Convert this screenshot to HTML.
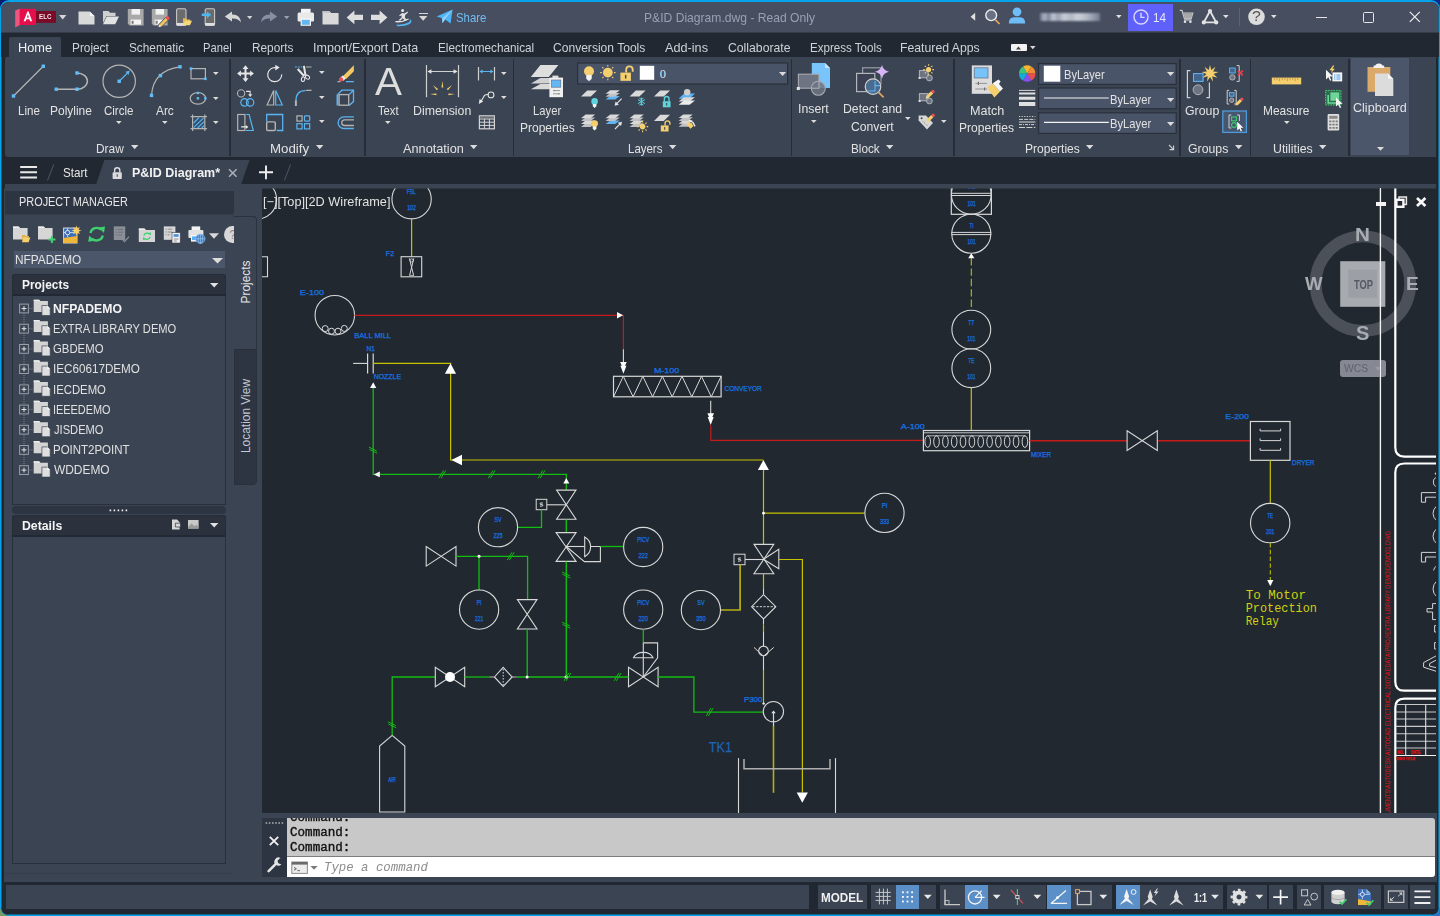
<!DOCTYPE html>
<html>
<head>
<meta charset="utf-8">
<title>P&amp;ID Diagram.dwg - Read Only</title>
<style>
*{box-sizing:border-box;margin:0;padding:0}
html,body{width:1440px;height:916px;overflow:hidden;background:#04a3ea}
body{font-family:"Liberation Sans",sans-serif;font-size:12px;color:#e4e4e4;position:relative}
.abs{position:absolute}
#win{position:absolute;left:0;top:0;width:1440px;height:916px;border:solid #04a3ea;border-width:2px 1px 1px 1px;border-radius:9px;background:#23262d;overflow:hidden}
#inner{position:absolute;left:-1px;top:-2px;width:1440px;height:916px}
#titlebar{position:absolute;left:0;top:0;width:1440px;height:32px;background:#464e5f}
.t{position:absolute;white-space:nowrap;line-height:1}
svg{position:absolute;overflow:visible}
</style>
</head>
<body>
<div class="abs" style="left:0;top:0;width:10px;height:10px;background:#0b1c6e"></div><div class="abs" style="left:1430px;top:0;width:10px;height:10px;background:#0b2a8c"></div><div class="abs" style="left:0;top:906px;width:10px;height:10px;background:#7d9a5c"></div><div class="abs" style="left:1430px;top:906px;width:10px;height:10px;background:#2f6fc4"></div>
<div id="win"><div id="inner">
<div id="titlebar"></div>
<div class="abs" style="left:1px;top:7px;width:1px;height:902px;background:#14648c"></div><div class="abs" style="left:1438px;top:7px;width:1px;height:902px;background:#14648c"></div><div class="abs" style="left:7px;top:914px;width:1426px;height:1px;background:#14648c"></div>
<!-- p1_title.py -->
<svg style="left:14px;top:7px;" width="44" height="22" viewBox="0 0 44 22">
<path d="M1.2 3.6 L5.8 1.8 V18 L1.2 20.6Z" fill="#f0557f"/>
<rect x="5.8" y="1.8" width="16.2" height="16.2" fill="#e5104b"/>
<path d="M13.4 4.4 L9.6 14.2 H11.7 L12.4 12.2 H15.4 L16.1 14.2 H18.2 L14.6 4.4Z M12.9 10.6 L13.9 7.4 L14.9 10.6Z" fill="#fff" fill-rule="evenodd"/>
<rect x="22" y="4" width="20" height="11.8" fill="#7a0a26"/>
</svg>
<span class="t" style="left:39.38px;top:13.23px;font-size:7.3px;color:#f3e6ea;font-weight:bold;transform:scaleX(0.8489);transform-origin:0 0;">ELC</span>
<svg style="left:58.599999999999994px;top:14.5px" width="7.4" height="4.4" viewBox="0 0 7.4 4.4"><path d="M0 0H7.4L3.7 4.4Z" fill="#d6d6d6"/></svg>
<svg style="left:78px;top:10px;" width="18" height="16" viewBox="0 0 18 16"><path d="M0.5 1.5H11.5L16.5 6V14.5H0.5Z" fill="#d9d9d9"/><path d="M11.8 1.5V6H16.5Z" fill="#f4f4f4"/></svg>
<svg style="left:102px;top:10px;" width="18" height="16" viewBox="0 0 18 16"><path d="M1 1H6.5L8 2.8H13.5V6H4.5L1 13Z" fill="#cfcfcf"/><path d="M4.8 6.5H17L13.2 14.2H1Z" fill="#e2e2e2"/></svg>
<svg style="left:126.5px;top:8px;" width="18" height="19" viewBox="0 0 18 19"><path d="M0.8 1H16.6V17.6H2.6L0.8 15.8Z" fill="#a9a9a9"/><rect x="4.6" y="1" width="8.4" height="5.6" fill="#f2f2f2"/><rect x="3.6" y="11.6" width="10.4" height="5" fill="#f5f5f5"/><rect x="4.6" y="12.8" width="2" height="3" fill="#7a7a7a"/></svg>
<svg style="left:150.8px;top:8px;" width="18" height="19" viewBox="0 0 18 19"><path d="M0.8 1H16.6V17.6H2.6L0.8 15.8Z" fill="#a9a9a9"/><rect x="4.6" y="1" width="8.4" height="5.6" fill="#f2f2f2"/><rect x="3.6" y="11.6" width="10.4" height="5" fill="#f5f5f5"/><rect x="4.6" y="12.8" width="2" height="3" fill="#7a7a7a"/></svg>
<svg style="left:158px;top:15px;" width="12" height="12" viewBox="0 0 12 12"><rect x="0" y="3" width="8" height="9" fill="#464e5f" opacity="0"/><path d="M1.2 9.2 L7.6 2.4 L10.4 5 L4 11.6 L0.6 12.2Z" fill="#f2c55c" stroke="#464e5f" stroke-width="1"/><path d="M7.2 2.8 L8.8 1.2 Q9.6 0.6 10.4 1.4 L11.4 2.4 Q12 3.2 11.2 4 L10 5.2Z" fill="#e8505b"/><path d="M0.6 12.2 L1.2 9.6 L3.4 11.6Z" fill="#e8e8e8"/></svg>
<svg style="left:176px;top:8px;" width="18" height="19" viewBox="0 0 18 19"><rect x="0.6" y="0.8" width="9.4" height="16.6" rx="1.4" fill="#6b6b6b" stroke="#c9c9c9" stroke-width="1.1"/><rect x="0.6" y="15" width="9.4" height="2.4" fill="#dedede"/><path d="M7 10.2H10L11 11.4H14.2V13H8.4L7 16.8Z" fill="#e9b94d"/><path d="M8.6 12.8H16L14 17.2H7Z" fill="#f7d77a"/></svg>
<svg style="left:201px;top:8px;" width="16" height="19" viewBox="0 0 16 19"><rect x="4.2" y="0.8" width="9.4" height="16.6" rx="1.4" fill="#6b6b6b" stroke="#c9c9c9" stroke-width="1.1"/><rect x="4.2" y="15" width="9.4" height="2.4" fill="#dedede"/><path d="M0.8 5.6H6V3.4L10.2 6.8L6 10.2V8H0.8Z" fill="#4db6f5"/></svg>
<svg style="left:224px;top:11px;" width="18" height="13" viewBox="0 0 18 13"><path d="M0.8 5.4L8 0.6V3.6Q16 3.2 17 11.4Q14 7.2 8 7.6V10.6Z" fill="#d6d6d6"/></svg>
<svg style="left:247.3px;top:16px" width="5.4" height="3.2" viewBox="0 0 5.4 3.2"><path d="M0 0H5.4L2.7 3.2Z" fill="#d6d6d6"/></svg>
<svg style="left:260px;top:11px;" width="18" height="13" viewBox="0 0 18 13"><path d="M17.2 5.4L10 0.6V3.6Q2 3.2 1 11.4Q4 7.2 10 7.6V10.6Z" fill="#8790a2"/></svg>
<svg style="left:283.90000000000003px;top:16px" width="5.4" height="3.2" viewBox="0 0 5.4 3.2"><path d="M0 0H5.4L2.7 3.2Z" fill="#9aa2b2"/></svg>
<svg style="left:297px;top:8px;" width="18" height="19" viewBox="0 0 18 19"><rect x="4" y="0.8" width="9.6" height="5" fill="#f4f4f4"/><path d="M2 4.4H15.6Q17 4.4 17 6V12.6Q17 13.6 16 13.6H1.6Q0.6 13.6 0.6 12.6V6Q0.6 4.4 2 4.4Z" fill="#e9e9e9"/><rect x="3.6" y="10.4" width="10.4" height="7.4" fill="#f6f6f6"/><rect x="4.8" y="11.8" width="8" height="5" fill="#63b7f3"/></svg>
<svg style="left:321.5px;top:9.5px;" width="18" height="16" viewBox="0 0 18 16"><path d="M0.5 1.2H7.6L9 3H16.6V14.6H0.5Z" fill="#d9d9d9"/><path d="M0.5 1.2H7.6L9 3H0.5Z" fill="#c4c4c4"/></svg>
<svg style="left:346px;top:10px;" width="18" height="15" viewBox="0 0 18 15"><path d="M0.6 7.4L8.4 0.6V4.8H17V10H8.4V14.2Z" fill="#dedede"/></svg>
<svg style="left:370px;top:10px;" width="18" height="15" viewBox="0 0 18 15"><path d="M17.4 7.4L9.6 0.6V4.8H1V10H9.6V14.2Z" fill="#dedede"/></svg>
<svg style="left:394px;top:8px;" width="20" height="19" viewBox="0 0 20 19"><circle cx="8.6" cy="2.4" r="1.5" fill="#e4e4e4"/><path d="M5.2 7.2 L8.4 5 L10.6 5.4 L13.4 3.6 L14 4.4 L11.2 7 L10.8 9.6 L12.8 12 L11.4 12.8 L8.6 10.2 L6.6 12.6 L4.2 12.4 L7.6 9.4 L7.6 7.2 L5.8 8.2Z" fill="#e4e4e4"/><path d="M1.4 13.6 Q8 14.4 14.6 11" stroke="#e4e4e4" stroke-width="1.3" fill="none"/><path d="M2.6 16.6 Q10 17 14.4 14.6 Q16.8 13 15.6 11 Q18.6 12.6 16.6 15.2 Q12.6 18.6 3 18.2Z" fill="#55b4f2"/></svg>
<div class="abs" style="left:419.2px;top:12.8px;width:8.8px;height:1.4px;background:#d6d6d6;"></div>
<svg style="left:419.40000000000003px;top:15.6px" width="8.4" height="4.8" viewBox="0 0 8.4 4.8"><path d="M0 0H8.4L4.2 4.8Z" fill="#d6d6d6"/></svg>
<svg style="left:435.5px;top:9px;" width="18" height="16" viewBox="0 0 18 16"><path d="M0.6 7.6L16.6 0.6L14.6 14.4L9 10.4L6.6 14.2L6 9.2Z" fill="#4fb3f6"/><path d="M6 9.2L16.6 0.6L9 10.4L6.6 14.2Z" fill="#8fd0fb"/></svg>
<span class="t" style="left:456.48px;top:10.68px;font-size:13px;color:#72bdf3;transform:scaleX(0.8750);transform-origin:0 0;">Share</span>
<span class="t" style="left:643.57px;top:10.88px;font-size:13px;color:#98a1b3;transform:scaleX(0.9320);transform-origin:0 0;">P&amp;ID Diagram.dwg - Read Only</span>
<svg style="left:970px;top:12px;" width="6" height="10" viewBox="0 0 6 10"><path d="M5.2 0.8V8.8L0.6 4.8Z" fill="#e0e0e0"/></svg>
<svg style="left:984px;top:7px;" width="18" height="20" viewBox="0 0 18 20"><circle cx="7.2" cy="8.2" r="5.4" fill="#687086" stroke="#ececec" stroke-width="1.4"/><path d="M11.2 12.6L15.6 17" stroke="#e9a45a" stroke-width="1.7"/></svg>
<svg style="left:1008px;top:6px;" width="18" height="19" viewBox="0 0 18 19"><circle cx="9" cy="5.8" r="4.4" fill="#6ebdf8"/><path d="M0.8 17.6Q0.8 11.2 6 11.2H12Q17.2 11.2 17.2 17.6Z" fill="#6ebdf8"/></svg>
<div class="abs" style="left:1040px;top:13px;width:60px;height:8px;filter:blur(1.2px);opacity:.8;background:linear-gradient(90deg,#7d879b 0,#c7cfdd 8%,#8d97ab 14%,#dfe5ee 22%,#aeb7c8 30%,#e8ecf3 40%,#cdd4e0 52%,#eef1f6 62%,#d8dee8 74%,#b3bccb 86%,#7d879b 100%)"></div>
<svg style="left:1116.2px;top:15px" width="5.6" height="3.2" viewBox="0 0 5.6 3.2"><path d="M0 0H5.6L2.8 3.2Z" fill="#e0e0e0"/></svg>
<div class="abs" style="left:1128px;top:4px;width:45px;height:26.5px;background:#6061fb;"></div>
<svg style="left:1133px;top:9px;" width="16" height="16" viewBox="0 0 16 16"><circle cx="8" cy="8" r="7" fill="none" stroke="#d9d8ff" stroke-width="1.4"/><path d="M8 3.8V8.4H11.6" stroke="#d9d8ff" stroke-width="1.4" fill="none"/></svg>
<span class="t" style="left:1153.10px;top:11.48px;font-size:13px;color:#e6e6ff;transform:scaleX(0.9008);transform-origin:0 0;">14</span>
<svg style="left:1179px;top:9px;" width="16" height="16" viewBox="0 0 16 16"><path d="M0.8 1.4H3L5.4 9.6H12.2L13.8 4H4" stroke="#c9c9c9" stroke-width="1.2" fill="none"/><path d="M4.2 4.2H13.6L12.2 9.2H5.6Z" fill="#a8a8a8"/><circle cx="6" cy="12.8" r="1.3" fill="#e0e0e0"/><circle cx="11.4" cy="12.8" r="1.3" fill="#e0e0e0"/><path d="M5 11H12.6" stroke="#e0e0e0" stroke-width="1"/></svg>
<svg style="left:1201px;top:8px;" width="18" height="18" viewBox="0 0 18 18"><path d="M9 3L2.8 14.4H15.2Z" fill="none" stroke="#e2e2e2" stroke-width="1.9" stroke-linejoin="round"/><circle cx="9" cy="3" r="2.1" fill="#e2e2e2"/><circle cx="2.8" cy="14.4" r="2.1" fill="#e2e2e2"/><circle cx="15.2" cy="14.4" r="2.1" fill="#e2e2e2"/></svg>
<svg style="left:1223.2px;top:15px" width="5.6" height="3.2" viewBox="0 0 5.6 3.2"><path d="M0 0H5.6L2.8 3.2Z" fill="#e0e0e0"/></svg>
<div class="abs" style="left:1239.2px;top:7.6px;width:1px;height:18px;background:#59647b;"></div>
<svg style="left:1247px;top:8px;" width="18" height="18" viewBox="0 0 18 18"><circle cx="9.5" cy="8.8" r="8.3" fill="#dcdcdc"/></svg>
<span class="t" style="left:1251.92px;top:9.34px;font-size:14px;color:#555;transform:scaleX(1.1343);transform-origin:0 0;">?</span>
<svg style="left:1271.2px;top:15px" width="5.6" height="3.2" viewBox="0 0 5.6 3.2"><path d="M0 0H5.6L2.8 3.2Z" fill="#e0e0e0"/></svg>
<div class="abs" style="left:1316px;top:17px;width:10.5px;height:1.1px;background:#e6e6e6;"></div>
<div class="abs" style="left:1363px;top:12px;width:10.5px;height:10.5px;border:1.2px solid #e6e6e6;border-radius:1.5px"></div>
<svg style="left:1409px;top:11px;" width="12" height="12" viewBox="0 0 12 12"><path d="M0.8 0.8L10.8 10.8M10.8 0.8L0.8 10.8" stroke="#eeeeee" stroke-width="1.2"/></svg>
<!-- p2a_ribbon.py -->
<div class="abs" style="left:0px;top:32px;width:1440px;height:25px;background:#222831;"></div>
<div class="abs" style="left:0px;top:32px;width:1440px;height:1px;background:#343b49;"></div>
<div class="abs" style="left:9px;top:36.5px;width:52px;height:21px;background:#3b4453;border-radius:2px 2px 0 0"></div>
<div class="abs" style="left:5px;top:57px;width:1431px;height:100px;background:#3b4453;border-radius:2px 0 0 3px"></div>
<span class="t" style="left:18.45px;top:40.72px;font-size:13.4px;color:#f0f0f0;transform:scaleX(0.9531);transform-origin:0 0;">Home</span>
<span class="t" style="left:72.03px;top:40.72px;font-size:13.4px;color:#cfd2d8;transform:scaleX(0.8827);transform-origin:0 0;">Project</span>
<span class="t" style="left:128.97px;top:40.72px;font-size:13.4px;color:#cfd2d8;transform:scaleX(0.8807);transform-origin:0 0;">Schematic</span>
<span class="t" style="left:203.33px;top:40.72px;font-size:13.4px;color:#cfd2d8;transform:scaleX(0.8359);transform-origin:0 0;">Panel</span>
<span class="t" style="left:251.53px;top:40.72px;font-size:13.4px;color:#cfd2d8;transform:scaleX(0.8830);transform-origin:0 0;">Reports</span>
<span class="t" style="left:312.63px;top:40.72px;font-size:13.4px;color:#cfd2d8;transform:scaleX(0.9367);transform-origin:0 0;">Import/Export Data</span>
<span class="t" style="left:437.78px;top:40.72px;font-size:13.4px;color:#cfd2d8;transform:scaleX(0.8791);transform-origin:0 0;">Electromechanical</span>
<span class="t" style="left:553.12px;top:40.72px;font-size:13.4px;color:#cfd2d8;transform:scaleX(0.9008);transform-origin:0 0;">Conversion Tools</span>
<span class="t" style="left:665.30px;top:40.72px;font-size:13.4px;color:#cfd2d8;transform:scaleX(0.9465);transform-origin:0 0;">Add-ins</span>
<span class="t" style="left:727.66px;top:40.72px;font-size:13.4px;color:#cfd2d8;transform:scaleX(0.9123);transform-origin:0 0;">Collaborate</span>
<span class="t" style="left:809.55px;top:40.72px;font-size:13.4px;color:#cfd2d8;transform:scaleX(0.8640);transform-origin:0 0;">Express Tools</span>
<span class="t" style="left:900.39px;top:40.72px;font-size:13.4px;color:#cfd2d8;transform:scaleX(0.9147);transform-origin:0 0;">Featured Apps</span>
<div class="abs" style="left:1010.5px;top:43.6px;width:16.5px;height:7.6px;background:#f2f2f2;border-radius:1px"></div>
<svg style="left:1016.2px;top:45.6px;" width="5" height="4" viewBox="0 0 5 4"><path d="M0 3.4H5L2.5 0.4Z" fill="#444"/></svg>
<svg style="left:1030.0px;top:46.2px" width="5.6" height="3.2" viewBox="0 0 5.6 3.2"><path d="M0 0H5.6L2.8 3.2Z" fill="#d8d8d8"/></svg>
<div class="abs" style="left:229.3px;top:58.5px;width:1.6px;height:97.5px;background:#272d38;"></div>
<div class="abs" style="left:364.2px;top:58.5px;width:1.6px;height:97.5px;background:#272d38;"></div>
<div class="abs" style="left:512.8px;top:58.5px;width:1.6px;height:97.5px;background:#272d38;"></div>
<div class="abs" style="left:790.6px;top:58.5px;width:1.6px;height:97.5px;background:#272d38;"></div>
<div class="abs" style="left:953.2px;top:58.5px;width:1.6px;height:97.5px;background:#272d38;"></div>
<div class="abs" style="left:1179.2px;top:58.5px;width:1.6px;height:97.5px;background:#272d38;"></div>
<div class="abs" style="left:1249.8px;top:58.5px;width:1.6px;height:97.5px;background:#272d38;"></div>
<div class="abs" style="left:1348.4px;top:58.5px;width:1.6px;height:97.5px;background:#272d38;"></div>
<svg style="left:5px;top:57px;" width="230" height="100" viewBox="0 0 230 100">
<path d="M8.5 39 L38.3 9.25" stroke="#b4b4b4" stroke-width="1.2"/><rect x="6.80" y="37.30" width="3.4" height="3.4" fill="#62bdf7"/><rect x="36.60" y="7.55" width="3.4" height="3.4" fill="#62bdf7"/>
<path d="M51.25 32.2 H72 A10.4 8.1 0 0 0 72 16" stroke="#b4b4b4" stroke-width="1.5" fill="none"/><rect x="49.55" y="30.50" width="3.4" height="3.4" fill="#62bdf7"/><rect x="70.30" y="30.50" width="3.4" height="3.4" fill="#62bdf7"/><rect x="70.30" y="14.30" width="3.4" height="3.4" fill="#62bdf7"/>
<circle cx="114.2" cy="24.25" r="16.2" stroke="#b4b4b4" stroke-width="1.2" fill="none"/>
<path d="M114.2 24.25 L122.5 16" stroke="#5ab4f0" stroke-width="1.1"/><path d="M124.8 13.6 L123.6 18 L120.4 14.8Z" fill="#5ab4f0"/><rect x="112.50" y="22.55" width="3.4" height="3.4" fill="#62bdf7"/>
<path d="M146.5 38.4 Q148 13.5 175 9.8" stroke="#b4b4b4" stroke-width="1.2" fill="none"/><rect x="144.80" y="36.70" width="3.4" height="3.4" fill="#62bdf7"/><rect x="153.70" y="16.90" width="3.4" height="3.4" fill="#62bdf7"/><rect x="173.30" y="8.10" width="3.4" height="3.4" fill="#62bdf7"/>
<rect x="186" y="11.6" width="14.4" height="10.2" stroke="#b4b4b4" stroke-width="1.2" fill="none"/><rect x="184.70" y="10.30" width="2.6" height="2.6" fill="#62bdf7"/><rect x="199.10" y="20.50" width="2.6" height="2.6" fill="#62bdf7"/>
<ellipse cx="192.9" cy="41.3" rx="7.7" ry="5.8" stroke="#b4b4b4" stroke-width="1.2" fill="none"/><rect x="191.70" y="34.80" width="2.4" height="2.4" fill="#62bdf7"/><rect x="191.70" y="40.10" width="2.4" height="2.4" fill="#62bdf7"/><rect x="199.20" y="40.10" width="2.4" height="2.4" fill="#62bdf7"/>
<rect x="188.4" y="60.6" width="10.6" height="10.4" fill="#33506d"/>
<path d="M188.6 66 L194 60.6 M188.6 70.6 L198.6 60.8 M192.6 71 L199 64.6 M196.6 71 L199 68.6" stroke="#5ab4f0" stroke-width="1.1"/>
<path d="M185.6 59.6H202 M185.6 71.6H202 M187.6 57.6V74 M199.8 57.6V74" stroke="#b4b4b4" stroke-width="1.2"/>
</svg>
<span class="t" style="left:17.77px;top:103.68px;font-size:13px;color:#e2e2e2;transform:scaleX(0.8930);transform-origin:0 0;">Line</span>
<span class="t" style="left:50.24px;top:103.68px;font-size:13px;color:#e2e2e2;transform:scaleX(0.9214);transform-origin:0 0;">Polyline</span>
<span class="t" style="left:104.38px;top:103.68px;font-size:13px;color:#e2e2e2;transform:scaleX(0.8844);transform-origin:0 0;">Circle</span>
<svg style="left:116.2px;top:121.2px" width="5.6" height="3" viewBox="0 0 5.6 3"><path d="M0 0H5.6L2.8 3Z" fill="#dcdcdc"/></svg>
<span class="t" style="left:155.80px;top:103.68px;font-size:13px;color:#e2e2e2;transform:scaleX(0.9115);transform-origin:0 0;">Arc</span>
<svg style="left:161.5px;top:121.2px" width="5.6" height="3" viewBox="0 0 5.6 3"><path d="M0 0H5.6L2.8 3Z" fill="#dcdcdc"/></svg>
<svg style="left:212.79999999999998px;top:71.7px" width="5.6" height="3" viewBox="0 0 5.6 3"><path d="M0 0H5.6L2.8 3Z" fill="#dcdcdc"/></svg>
<svg style="left:212.79999999999998px;top:96.7px" width="5.6" height="3" viewBox="0 0 5.6 3"><path d="M0 0H5.6L2.8 3Z" fill="#dcdcdc"/></svg>
<svg style="left:212.79999999999998px;top:120.8px" width="5.6" height="3" viewBox="0 0 5.6 3"><path d="M0 0H5.6L2.8 3Z" fill="#dcdcdc"/></svg>
<span class="t" style="left:96.49px;top:141.68px;font-size:13px;color:#e2e2e2;transform:scaleX(0.9144);transform-origin:0 0;">Draw</span><svg style="left:131.0px;top:144.9px" width="7.4" height="4.3" viewBox="0 0 7.4 4.3"><path d="M0 0H7.4L3.7 4.3Z" fill="#dcdcdc"/></svg>
<svg style="left:230px;top:57px;" width="135" height="100" viewBox="0 0 135 100">
<g transform="translate(15.5,16.6)"><path d="M0 -8.4 L3 -4.6 H1 V-1 H4.6 V-3 L8.4 0 L4.6 3 V1 H1 V4.6 H3 L0 8.4 L-3 4.6 H-1 V1 H-4.6 V3 L-8.4 0 L-4.6 -3 V-1 H-1 V-4.6 H-3Z" fill="#e6e6e6"/></g>
<g transform="translate(44.7,17.4)"><path d="M1.2 -6.6 A7 7 0 1 0 7 0" stroke="#e6e6e6" stroke-width="1.2" fill="none"/><path d="M0.6 -9.6 L5 -6.8 L0.6 -4Z" fill="#e6e6e6"/></g>
<g transform="translate(73.3,16.6)"><path d="M-8.4 -6.6H-1" stroke="#5ab4f0" stroke-width="1.1" stroke-dasharray="2 1"/><path d="M2.6 -6.6H8.2" stroke="#b4b4b4" stroke-width="1.1"/>
<path d="M0.6 -7.8 L2.2 2 M-5.6 -4.6 L0.8 2.4" stroke="#e6e6e6" stroke-width="2"/><ellipse cx="-0.2" cy="5.6" rx="1.7" ry="2.3" stroke="#e6e6e6" stroke-width="1.1" fill="none" transform="rotate(15 -0.2 5.6)"/><ellipse cx="4.2" cy="3.6" rx="1.7" ry="2.3" stroke="#e6e6e6" stroke-width="1.1" fill="none" transform="rotate(-55 4.2 3.6)"/></g>
<g transform="translate(115.5,16.6)"><path d="M-8 8H-5" stroke="#b4b4b4" stroke-width="1.1"/><path d="M0.4 8H8.4" stroke="#5ab4f0" stroke-width="1.1"/>
<path d="M-3.4 3.4 L8.4 -8.4 V-2.4 L0.6 5.4 Z" fill="#f3c861"/><path d="M-5.4 4.4 L-3 2 L0.2 5 L-2 7.2Z" fill="#f1f1f1"/><circle cx="-4.4" cy="5.8" r="2.1" fill="#ee4d5a"/></g>
<g transform="translate(15.5,41)"><circle cx="-4.4" cy="-4.6" r="3.6" stroke="#b4b4b4" stroke-width="1.1" fill="none"/><path d="M0.6 -6.6H4.6V-3.6" stroke="#e6e6e6" stroke-width="1.1" fill="none"/><path d="M2.6 -3.8H6.8L4.7 -1Z" fill="#e6e6e6"/>
<circle cx="-1" cy="4.4" r="3.7" stroke="#5ab4f0" stroke-width="1.2" fill="none"/><circle cx="4.6" cy="4.4" r="3.7" stroke="#5ab4f0" stroke-width="1.2" fill="none"/></g>
<g transform="translate(44.7,41)"><path d="M-1 -7.6 L-7.6 7 H-1Z" stroke="#b4b4b4" stroke-width="1.2" fill="none"/><path d="M1 -7.6 L7.6 7 H1Z" stroke="#5ab4f0" stroke-width="1.2" fill="none"/></g>
<g transform="translate(73.3,41)"><path d="M-7.4 3 Q-7.4 -7.4 2 -7.4" stroke="#5ab4f0" stroke-width="1.3" fill="none"/><path d="M-7.4 2.4V8" stroke="#b4b4b4" stroke-width="2"/><path d="M2.4 -7.6H8.2" stroke="#b4b4b4" stroke-width="1.3"/></g>
<g transform="translate(115.5,41)"><path d="M-8 -3.4 L-3.6 -7.8 H8 V3.6 L3.6 7.6 M3.6 -3.4 L8 -7.8" stroke="#5ab4f0" stroke-width="1.3" fill="none"/><path d="M-8 -3.4V7.6" stroke="#5ab4f0" stroke-width="2"/><rect x="-6.4" y="-3.4" width="9.6" height="10.6" stroke="#b4b4b4" stroke-width="1.3" fill="none"/></g>
<g transform="translate(15.5,65.5)"><rect x="-7.8" y="-8" width="7.2" height="16" stroke="#b4b4b4" stroke-width="1.2" fill="none"/><path d="M0.6 -8H3.6L7.8 8H0.4" stroke="#5ab4f0" stroke-width="1.2" fill="none"/><path d="M-4.4 4.4H1" stroke="#e6e6e6" stroke-width="1.1"/><path d="M0.4 2.4L2.8 4.4L0.4 6.4Z" fill="#e6e6e6"/></g>
<g transform="translate(44.7,65.5)"><path d="M-8 -1V-8H8V8H2" stroke="#5ab4f0" stroke-width="1.3" fill="none"/><rect x="-8" y="-0.6" width="8.6" height="8.6" rx="1" stroke="#b4b4b4" stroke-width="1.4" fill="none"/></g>
<g transform="translate(73.3,65.5)"><rect x="-6.4" y="-6.6" width="5.2" height="5.2" stroke="#b4b4b4" stroke-width="1.2" fill="none"/><rect x="1.2" y="-6.6" width="5.2" height="5.2" rx="0.8" stroke="#5ab4f0" stroke-width="1.2" fill="none"/><rect x="-6.4" y="1.2" width="5.2" height="5.2" stroke="#5ab4f0" stroke-width="1.2" fill="none"/><rect x="1.2" y="1.2" width="5.2" height="5.2" stroke="#5ab4f0" stroke-width="1.2" fill="none"/></g>
<g transform="translate(115.5,65.5)"><path d="M8.4 -5.6H-1.6A5.8 5.8 0 0 0 -1.6 6H8.4" stroke="#5ab4f0" stroke-width="1.3" fill="none"/><path d="M8.4 -2.6H-1A2.8 2.8 0 0 0 -1 3H8.4" stroke="#b4b4b4" stroke-width="1.3" fill="none"/></g>
</svg>
<svg style="left:318.5px;top:71.4px" width="5.6" height="3" viewBox="0 0 5.6 3"><path d="M0 0H5.6L2.8 3Z" fill="#dcdcdc"/></svg>
<svg style="left:318.5px;top:95.8px" width="5.6" height="3" viewBox="0 0 5.6 3"><path d="M0 0H5.6L2.8 3Z" fill="#dcdcdc"/></svg>
<svg style="left:318.5px;top:120.2px" width="5.6" height="3" viewBox="0 0 5.6 3"><path d="M0 0H5.6L2.8 3Z" fill="#dcdcdc"/></svg>
<span class="t" style="left:269.88px;top:141.68px;font-size:13px;color:#e2e2e2;transform:scaleX(1.0215);transform-origin:0 0;">Modify</span><svg style="left:315.6px;top:144.9px" width="7.4" height="4.3" viewBox="0 0 7.4 4.3"><path d="M0 0H7.4L3.7 4.3Z" fill="#dcdcdc"/></svg>
<span class="t" style="left:375.10px;top:61.74px;font-size:39.7px;color:#dcdcdc;transform:scaleX(1.0190);transform-origin:0 0;">A</span>
<span class="t" style="left:378.04px;top:103.88px;font-size:13px;color:#e2e2e2;transform:scaleX(0.8632);transform-origin:0 0;">Text</span>
<svg style="left:385.3px;top:121.2px" width="5.6" height="3" viewBox="0 0 5.6 3"><path d="M0 0H5.6L2.8 3Z" fill="#dcdcdc"/></svg>
<svg style="left:365px;top:57px;" width="150" height="100" viewBox="0 0 150 100">
<path d="M61.5 8V40.3 M93.5 8V40.3" stroke="#d0d0d0" stroke-width="1.2"/><path d="M65 14.5H90" stroke="#d0d0d0" stroke-width="1"/><path d="M62.4 14.5L66.4 12.2V16.8Z M92.6 14.5L88.6 12.2V16.8Z" fill="#e6e6e6"/>
<g transform="translate(77.4,37.6)" fill="#f5cf6e"><path d="M-0.9 -7 L0 -13.6 L0.9 -7Z"/><path d="M-0.9 -7 L0 -13.6 L0.9 -7Z" transform="rotate(-45)"/><path d="M-0.9 -7 L0 -13.6 L0.9 -7Z" transform="rotate(45)"/><path d="M-0.9 -6 L0 -12.4 L0.9 -6Z" transform="rotate(-87)"/><path d="M-0.9 -6 L0 -12.4 L0.9 -6Z" transform="rotate(87)"/></g>
<path d="M113.5 10V23.6 M129.5 10V23.6" stroke="#d0d0d0" stroke-width="1.2"/><path d="M116.4 14.5H126.6" stroke="#5ab4f0" stroke-width="1"/><path d="M114.4 14.5L117.6 12.6V16.4Z M128.6 14.5L125.4 12.6V16.4Z" fill="#5ab4f0"/>
<circle cx="126" cy="37.9" r="2.9" stroke="#e0e0e0" stroke-width="1.1" fill="none"/><path d="M123.2 37.6 Q119.6 37 118.6 40 L116 44.4" stroke="#e0e0e0" stroke-width="1.1" fill="none"/><path d="M113.8 46.9 L114.6 42 L118.2 44.4Z" fill="#e6e6e6"/>
<rect x="114.4" y="58.8" width="15" height="13" stroke="#d6d6d6" stroke-width="1.2" fill="none"/><path d="M114.4 62H129.4 M114.4 65.2H129.4 M114.4 68.4H129.4 M119.4 62V71.8 M124.4 62V71.8" stroke="#d6d6d6" stroke-width="1"/><rect x="114.4" y="58.8" width="15" height="3" fill="#9a9a9a" opacity=".5"/>
</svg>
<span class="t" style="left:413.16px;top:103.88px;font-size:13px;color:#e2e2e2;transform:scaleX(0.9496);transform-origin:0 0;">Dimension</span>
<svg style="left:501.2px;top:71.7px" width="5.6" height="3" viewBox="0 0 5.6 3"><path d="M0 0H5.6L2.8 3Z" fill="#dcdcdc"/></svg>
<svg style="left:501.2px;top:96.2px" width="5.6" height="3" viewBox="0 0 5.6 3"><path d="M0 0H5.6L2.8 3Z" fill="#dcdcdc"/></svg>
<span class="t" style="left:402.70px;top:141.68px;font-size:13px;color:#e2e2e2;transform:scaleX(0.9788);transform-origin:0 0;">Annotation</span><svg style="left:469.6px;top:144.9px" width="7.4" height="4.3" viewBox="0 0 7.4 4.3"><path d="M0 0H7.4L3.7 4.3Z" fill="#dcdcdc"/></svg>
<!-- p2b_ribbon.py -->
<svg style="left:513px;top:57px;" width="280" height="100" viewBox="0 0 280 100">
<path d="M27.4 27.0H45.4L35.8 32.2H17.8Z" fill="#d9d9d9"/><path d="M27.4 21.0H45.4L35.8 26.4H17.8Z" fill="#d2d2d2"/><path d="M27.4 8.0H45.4L35.8 20.0H17.8Z" fill="#dedede"/>
<rect x="36.4" y="20.6" width="13.6" height="19.6" fill="#f0f0f0"/><rect x="39.4" y="18.6" width="6" height="2.4" fill="#e0e0e0"/><rect x="38.4" y="23" width="9.4" height="7.2" fill="#64b6f4" stroke="#5a6a80" stroke-width=".6"/>
<path d="M40 33.6H47M40 36.8H47" stroke="#8a8a8a" stroke-width=".9"/><path d="M40 33.6l1.6-1v2zM47 36.8l-1.6-1v2z" fill="#8a8a8a"/>
<rect x="64.6" y="6" width="210" height="21" fill="#4a5469" stroke="#2a303b" stroke-width="1.2"/>
<circle cx="76" cy="14.2" r="5" fill="#f5cf6e"/><path d="M73.25 17.95H78.75V21.70L76.00 24.20L73.25 21.70Z" fill="#f2f2f2"/>
<circle cx="94.8" cy="15.6" r="4.9" fill="#f5cf6e"/><path d="M100.90 15.60L102.50 15.60" stroke="#f5cf6e" stroke-width="1.1"/><path d="M99.11 19.91L100.24 21.04" stroke="#f5cf6e" stroke-width="1.1"/><path d="M94.80 21.70L94.80 23.30" stroke="#f5cf6e" stroke-width="1.1"/><path d="M90.49 19.91L89.36 21.04" stroke="#f5cf6e" stroke-width="1.1"/><path d="M88.70 15.60L87.10 15.60" stroke="#f5cf6e" stroke-width="1.1"/><path d="M90.49 11.29L89.36 10.16" stroke="#f5cf6e" stroke-width="1.1"/><path d="M94.80 9.50L94.80 7.90" stroke="#f5cf6e" stroke-width="1.1"/><path d="M99.11 11.29L100.24 10.16" stroke="#f5cf6e" stroke-width="1.1"/>
<path d="M113.18 15.60V12.48A3.27 3.27 0 0 1 119.71 12.48V14.75" stroke="#f5cf6e" stroke-width="1.85" fill="none"/><rect x="107.40" y="15.60" width="10.51" height="8.24" fill="#f5cf6e"/><rect x="111.94" y="17.87" width="1.42" height="3.69" fill="#3b4453"/>
<rect x="126.8" y="8.8" width="14.4" height="14" fill="#fff"/>
</svg>
<span class="t" style="left:659.80px;top:67.56px;font-size:12.4px;color:#dfe6f2;font-family:'Liberation Serif',serif;">0</span>
<svg style="left:779.1999999999999px;top:72.2px" width="7.2" height="4" viewBox="0 0 7.2 4"><path d="M0 0H7.2L3.6 4Z" fill="#dcdcdc"/></svg>
<svg style="left:513px;top:57px;" width="280" height="100" viewBox="0 0 280 100">
<path d="M74.2 33.4H84.0L77.8 39.6H68.0Z" fill="#d9d9d9"/><circle cx="81.6" cy="44.4" r="3.3" fill="#5fd4dc"/><path d="M79.78 46.88H83.41V49.35L81.60 51.00L79.78 49.35Z" fill="#f2f2f2"/>
<path d="M97.2 39.0H106.8L102.2 42.6H92.6Z" fill="#62b5f3"/><path d="M97.2 36.1H106.8L102.2 39.7H92.6Z" fill="#c2c2c2"/><path d="M97.2 33.2H106.8L102.2 36.8H92.6Z" fill="#d9d9d9"/><path d="M108.6 41.6L103 47.4" stroke="#e6e6e6" stroke-width="1.1"/><path d="M101.6 48.8L102.6 44.6L105.8 47.8Z" fill="#e6e6e6"/>
<path d="M122.8 33.4H132.6L126.4 39.6H116.6Z" fill="#d9d9d9"/><g transform="translate(128.4,44.6)" stroke="#5fd4dc" stroke-width="1" fill="none"><path d="M0 -4V4M-3.5 -2L3.5 2M-3.5 2L3.5 -2"/><path d="M-2 -3.4L0 -2.2L2 -3.4M-2 3.4L0 2.2L2 3.4"/></g>
<path d="M147.2 33.4H157.0L150.8 39.6H141.0Z" fill="#d9d9d9"/><path d="M151.35 44.20V41.89A2.31 2.31 0 0 1 156.02 41.89V44.20" stroke="#5fd4dc" stroke-width="1.37" fill="none"/><rect x="149.80" y="44.20" width="7.77" height="6.09" fill="#5fd4dc"/><rect x="153.16" y="45.88" width="1.05" height="2.73" fill="#3b4453"/>
<path d="M171.0 36.4H182.0L176.6 41.8H165.6Z" fill="#5eb4f3"/><path d="M171.0 40.2H182.0L176.6 44.4H165.6Z" fill="#d9d9d9"/><path d="M171.0 43.6H182.0L176.6 47.8H165.6Z" fill="#ececec"/><circle cx="174.2" cy="35.2" r="3.2" fill="#cfcfcf"/>
<path d="M72.6 66.3H82.2L77.6 69.9H68.0Z" fill="#c2c2c2"/><path d="M72.6 63.4H82.2L77.6 67.0H68.0Z" fill="#d9d9d9"/><path d="M72.6 60.5H82.2L77.6 64.1H68.0Z" fill="#c2c2c2"/><path d="M72.6 57.6H82.2L77.6 61.2H68.0Z" fill="#d9d9d9"/><circle cx="81.6" cy="66.6" r="3.4" fill="#f5cf6e"/><path d="M79.73 69.15H83.47V71.70L81.60 73.40L79.73 71.70Z" fill="#f2f2f2"/>
<path d="M97.2 63.4H106.8L102.2 67.0H92.6Z" fill="#62b5f3"/><path d="M97.2 60.5H106.8L102.2 64.1H92.6Z" fill="#c2c2c2"/><path d="M97.2 57.6H106.8L102.2 61.2H92.6Z" fill="#d9d9d9"/><path d="M102 72L107.6 66.4" stroke="#e6e6e6" stroke-width="1.1"/><path d="M109 64.8L108 69L104.8 65.8Z" fill="#e6e6e6"/>
<path d="M121.2 66.3H130.8L126.2 69.9H116.6Z" fill="#c2c2c2"/><path d="M121.2 63.4H130.8L126.2 67.0H116.6Z" fill="#d9d9d9"/><path d="M121.2 60.5H130.8L126.2 64.1H116.6Z" fill="#c2c2c2"/><path d="M121.2 57.6H130.8L126.2 61.2H116.6Z" fill="#d9d9d9"/><circle cx="129.6" cy="69.6" r="2.8" fill="#f5cf6e"/><path d="M133.60 69.60L135.20 69.60" stroke="#f5cf6e" stroke-width="1.1"/><path d="M132.43 72.43L133.56 73.56" stroke="#f5cf6e" stroke-width="1.1"/><path d="M129.60 73.60L129.60 75.20" stroke="#f5cf6e" stroke-width="1.1"/><path d="M126.77 72.43L125.64 73.56" stroke="#f5cf6e" stroke-width="1.1"/><path d="M125.60 69.60L124.00 69.60" stroke="#f5cf6e" stroke-width="1.1"/><path d="M126.77 66.77L125.64 65.64" stroke="#f5cf6e" stroke-width="1.1"/><path d="M129.60 65.60L129.60 64.00" stroke="#f5cf6e" stroke-width="1.1"/><path d="M132.43 66.77L133.56 65.64" stroke="#f5cf6e" stroke-width="1.1"/>
<path d="M147.2 57.8H157.0L150.8 64.0H141.0Z" fill="#d9d9d9"/><path d="M152.07 68.40V66.09A2.42 2.42 0 0 1 156.90 66.09V67.77" stroke="#f5cf6e" stroke-width="1.37" fill="none"/><rect x="147.80" y="68.40" width="7.77" height="6.09" fill="#f5cf6e"/><rect x="151.16" y="70.08" width="1.05" height="2.73" fill="#3b4453"/>
<path d="M170.2 66.1H179.8L175.2 69.7H165.6Z" fill="#c2c2c2"/><path d="M170.2 63.2H179.8L175.2 66.8H165.6Z" fill="#d9d9d9"/><path d="M170.2 60.3H179.8L175.2 63.9H165.6Z" fill="#c2c2c2"/><path d="M170.2 57.4H179.8L175.2 61.0H165.6Z" fill="#d9d9d9"/><path d="M173.4 67.6L176.4 64.6L180.6 68.8L177.6 71.8Z" fill="#f5cf6e"/><path d="M175.8 63L180 65.4L182 69.4" stroke="#f4f4f4" stroke-width="1.3" fill="none"/>
</svg>
<span class="t" style="left:532.65px;top:103.98px;font-size:13px;color:#e2e2e2;transform:scaleX(0.8654);transform-origin:0 0;">Layer</span>
<span class="t" style="left:519.59px;top:120.68px;font-size:13px;color:#e2e2e2;transform:scaleX(0.9219);transform-origin:0 0;">Properties</span>
<span class="t" style="left:628.33px;top:141.68px;font-size:13px;color:#e2e2e2;transform:scaleX(0.8824);transform-origin:0 0;">Layers</span><svg style="left:669.0px;top:144.9px" width="7.4" height="4.3" viewBox="0 0 7.4 4.3"><path d="M0 0H7.4L3.7 4.3Z" fill="#dcdcdc"/></svg>
<svg style="left:790px;top:57px;" width="165" height="100" viewBox="0 0 165 100">
<path d="M21.8 6H35L40 11V31H21.8Z" fill="#79c4fb"/><path d="M35 6V11H40Z" fill="#c4e5fd"/>
<rect x="8.4" y="17.2" width="20.6" height="14" fill="#6f7482" stroke="#a8abb2" stroke-width="1.1"/>
<circle cx="28.3" cy="31.3" r="7" fill="#6f7482" fill-opacity=".85" stroke="#a8abb2" stroke-width="1.1"/>
<path d="M21.4 31.2H29V24.4" stroke="#a8abb2" stroke-width="1.1" fill="none"/>
<rect x="6.8" y="30" width="3" height="3" fill="#e4e4e4"/>
<rect x="72.6" y="10.8" width="18.4" height="16" fill="none" stroke="#9a9da6" stroke-width="1.2"/>
<rect x="66.6" y="16.4" width="18.2" height="18.2" fill="#3b4152" stroke="#b4b6bc" stroke-width="1.2"/>
<circle cx="83" cy="29.6" r="7.8" fill="#4a6a8e" stroke="#cfcfcf" stroke-width="1.2"/>
<path d="M77 34H85V24 M85 28.6H90" stroke="#62b4f0" stroke-width="1.1" fill="none"/>
<path d="M88.6 35.4L93.6 40.4" stroke="#e1a55f" stroke-width="1.6"/>
<path d="M92 7.8Q93 13.6 99 14.8Q93 16 92 21.8Q91 16 85 14.8Q91 13.6 92 7.8Z" fill="#d9b3f7"/>
</svg>
<span class="t" style="left:797.77px;top:102.48px;font-size:13px;color:#e2e2e2;transform:scaleX(0.9455);transform-origin:0 0;">Insert</span>
<svg style="left:810.5px;top:119.9px" width="5.6" height="3" viewBox="0 0 5.6 3"><path d="M0 0H5.6L2.8 3Z" fill="#dcdcdc"/></svg>
<span class="t" style="left:842.67px;top:102.28px;font-size:13px;color:#e2e2e2;transform:scaleX(0.9409);transform-origin:0 0;">Detect and</span>
<span class="t" style="left:850.74px;top:119.68px;font-size:13px;color:#e2e2e2;transform:scaleX(0.9374);transform-origin:0 0;">Convert</span>
<svg style="left:904.7px;top:116.9px" width="5.6" height="3" viewBox="0 0 5.6 3"><path d="M0 0H5.6L2.8 3Z" fill="#dcdcdc"/></svg>
<svg style="left:790px;top:57px;" width="165" height="100" viewBox="0 0 165 100">
<rect x="129.4" y="13.6" width="8.6" height="7.2" fill="#6f7482" stroke="#b0b3ba" stroke-width="1"/><rect x="128.6" y="20.0" width="2" height="2" fill="#e0e0e0"/><circle cx="139.4" cy="21.0" r="2.9" fill="#6f7482" stroke="#b0b3ba" stroke-width="1"/><circle cx="138.6" cy="12.6" r="2.6" fill="#f5cf6e"/><path d="M142.40 12.60L144.00 12.60" stroke="#f5cf6e" stroke-width="1.1"/><path d="M141.29 15.29L142.42 16.42" stroke="#f5cf6e" stroke-width="1.1"/><path d="M138.60 16.40L138.60 18.00" stroke="#f5cf6e" stroke-width="1.1"/><path d="M135.91 15.29L134.78 16.42" stroke="#f5cf6e" stroke-width="1.1"/><path d="M134.80 12.60L133.20 12.60" stroke="#f5cf6e" stroke-width="1.1"/><path d="M135.91 9.91L134.78 8.78" stroke="#f5cf6e" stroke-width="1.1"/><path d="M138.60 8.80L138.60 7.20" stroke="#f5cf6e" stroke-width="1.1"/><path d="M141.29 9.91L142.42 8.78" stroke="#f5cf6e" stroke-width="1.1"/>
<rect x="129.4" y="36.6" width="8.6" height="7.2" fill="#6f7482" stroke="#b0b3ba" stroke-width="1"/><rect x="128.6" y="43.0" width="2" height="2" fill="#e0e0e0"/><circle cx="139.4" cy="44.0" r="2.9" fill="#6f7482" stroke="#b0b3ba" stroke-width="1"/><g transform="translate(136.4,32.4) scale(1)"><path d="M0 6.4L4.6 1.8L6.8 4L2.2 8.6L-0.6 9.2Z" fill="#f5cf6e"/><path d="M4.6 1.8L5.8 0.6Q6.6 0 7.4 0.8L8 1.4Q8.8 2.2 8 3L6.8 4Z" fill="#ee4d5a"/><path d="M-0.6 9.2L0 7L1.8 8.6Z" fill="#ddd"/></g>
<path d="M128.6 58.4H136L143 66L137 72.6L128.6 63.4Z" fill="#d6d6d6"/><circle cx="131.6" cy="61.2" r="1" fill="#3b4453"/><path d="M132.6 64L137.6 69" stroke="#8a8a8a" stroke-width=".9" stroke-dasharray="1.2 .8"/><g transform="translate(136.6,56.2) scale(1)"><path d="M0 6.4L4.6 1.8L6.8 4L2.2 8.6L-0.6 9.2Z" fill="#f5cf6e"/><path d="M4.6 1.8L5.8 0.6Q6.6 0 7.4 0.8L8 1.4Q8.8 2.2 8 3L6.8 4Z" fill="#ee4d5a"/><path d="M-0.6 9.2L0 7L1.8 8.6Z" fill="#ddd"/></g>
</svg>
<svg style="left:941.0px;top:120.2px" width="5.6" height="3" viewBox="0 0 5.6 3"><path d="M0 0H5.6L2.8 3Z" fill="#dcdcdc"/></svg>
<span class="t" style="left:850.71px;top:141.68px;font-size:13px;color:#e2e2e2;transform:scaleX(0.8990);transform-origin:0 0;">Block</span><svg style="left:886.3px;top:144.9px" width="7.4" height="4.3" viewBox="0 0 7.4 4.3"><path d="M0 0H7.4L3.7 4.3Z" fill="#dcdcdc"/></svg>
<svg style="left:953px;top:57px;" width="230" height="100" viewBox="0 0 230 100">
<rect x="18.8" y="8.4" width="20.2" height="28.4" fill="#dcdcdc"/><rect x="21.2" y="10.8" width="13.8" height="10.2" fill="#78c2fa" stroke="#5b6b82" stroke-width=".7"/>
<path d="M22.4 26.4H34 M22.4 32H34" stroke="#8c8c8c" stroke-width=".9"/><path d="M25.4 24.8V28 M31.6 30.4V33.6" stroke="#6a6a6a" stroke-width="1.1"/>
<path d="M34 30.6L39.6 26.4L47 34.4L41.4 40.6Z" fill="#f5cf6e"/><path d="M39.6 26.4L43 24L45.6 22.4L47.6 24.6L46 27L50 31.6L47 34.4Z" fill="#f4f4f4"/>
<path d="M74.2 16.5L70.10 9.40A8.2 8.2 0 0 1 78.30 9.40Z" fill="#f6b430"/><path d="M74.2 16.5L78.30 9.40A8.2 8.2 0 0 1 82.40 16.50Z" fill="#f58a2f"/><path d="M74.2 16.5L82.40 16.50A8.2 8.2 0 0 1 78.30 23.60Z" fill="#e9504d"/><path d="M74.2 16.5L78.30 23.60A8.2 8.2 0 0 1 70.10 23.60Z" fill="#8b4df0"/><path d="M74.2 16.5L70.10 23.60A8.2 8.2 0 0 1 66.00 16.50Z" fill="#16acd8"/><path d="M74.2 16.5L66.00 16.50A8.2 8.2 0 0 1 70.10 9.40Z" fill="#3ec57c"/>
<path d="M66 33.4H82.3" stroke="#d6d6d6" stroke-width="1"/><path d="M66 36.6H82.3" stroke="#e0e0e0" stroke-width="2"/><path d="M66 41.3H82.3" stroke="#e0e0e0" stroke-width="3"/><path d="M66 47H82.3" stroke="#e0e0e0" stroke-width="4"/>
<path d="M66 59.5H82.3" stroke="#d0d0d0" stroke-width="1" stroke-dasharray="1.2 1.4"/><path d="M66 62.4H82.3" stroke="#d0d0d0" stroke-width="1" stroke-dasharray="4 1.2"/><path d="M66 65H82.3" stroke="#a8a8a8" stroke-width="1.6"/><path d="M66 67.6H82.3" stroke="#d0d0d0" stroke-width="1" stroke-dasharray="3 1 1 1"/><path d="M66 70.5H82.3" stroke="#d0d0d0" stroke-width="1" stroke-dasharray="6 1.4"/>
<rect x="85.6" y="6.6" width="137.6" height="20.8" fill="#4a5469" stroke="#2a303b" stroke-width="1.2"/>
<rect x="85.6" y="31" width="137.6" height="20.8" fill="#4a5469" stroke="#2a303b" stroke-width="1.2"/>
<rect x="85.6" y="55.8" width="137.6" height="20.6" fill="#4a5469" stroke="#2a303b" stroke-width="1.2"/>
<rect x="90.8" y="8.7" width="16.5" height="16" fill="#fff"/>
<path d="M91 41H155.8" stroke="#f0f0f0" stroke-width="1.2"/><path d="M91 65.3H155.8" stroke="#f4f4f4" stroke-width="1.2"/>
<path d="M216 88L220.4 92.4M220.6 88.6V92.6H216.6" stroke="#d0d0d0" stroke-width="1.1" fill="none"/>
</svg>
<span class="t" style="left:969.93px;top:103.78px;font-size:13px;color:#e2e2e2;transform:scaleX(0.9701);transform-origin:0 0;">Match</span>
<span class="t" style="left:958.98px;top:121.18px;font-size:13px;color:#e2e2e2;transform:scaleX(0.9271);transform-origin:0 0;">Properties</span>
<span class="t" style="left:1064.06px;top:67.98px;font-size:13px;color:#e2e2e2;transform:scaleX(0.8534);transform-origin:0 0;">ByLayer</span>
<span class="t" style="left:1110.05px;top:92.68px;font-size:13px;color:#e2e2e2;transform:scaleX(0.8621);transform-origin:0 0;">ByLayer</span>
<span class="t" style="left:1110.05px;top:116.98px;font-size:13px;color:#e2e2e2;transform:scaleX(0.8621);transform-origin:0 0;">ByLayer</span>
<svg style="left:1166.8000000000002px;top:72px" width="7.2" height="4" viewBox="0 0 7.2 4"><path d="M0 0H7.2L3.6 4Z" fill="#dcdcdc"/></svg>
<svg style="left:1166.8000000000002px;top:97.8px" width="7.2" height="4" viewBox="0 0 7.2 4"><path d="M0 0H7.2L3.6 4Z" fill="#dcdcdc"/></svg>
<svg style="left:1166.8000000000002px;top:122.2px" width="7.2" height="4" viewBox="0 0 7.2 4"><path d="M0 0H7.2L3.6 4Z" fill="#dcdcdc"/></svg>
<span class="t" style="left:1024.98px;top:141.68px;font-size:13px;color:#e2e2e2;transform:scaleX(0.9253);transform-origin:0 0;">Properties</span><svg style="left:1086.3px;top:144.9px" width="7.4" height="4.3" viewBox="0 0 7.4 4.3"><path d="M0 0H7.4L3.7 4.3Z" fill="#dcdcdc"/></svg>
<svg style="left:1180px;top:57px;" width="70" height="100" viewBox="0 0 70 100">
<path d="M10.4 13.6H7.4V40.6H10.4 M26.4 40.6H29.4V25.6" stroke="#d0d0d0" stroke-width="1.2" fill="none"/>
<rect x="13.5" y="16.6" width="9.6" height="7.8" fill="#42658c" stroke="#5eb1ef" stroke-width="1.1"/>
<circle cx="18" cy="32.8" r="4.9" fill="#6f7482" stroke="#b0b3ba" stroke-width="1"/>
<path d="M30.00 7.80L31.23 13.02L35.53 9.81L33.12 14.60L38.47 14.91L33.55 17.03L37.45 20.70L32.31 19.16L32.94 24.48L30.00 20.00L27.06 24.48L27.69 19.16L22.55 20.70L26.45 17.03L21.53 14.91L26.88 14.60L24.47 9.81L28.77 13.02Z" fill="#f5cf6e"/>
<g transform="translate(-1.4,0)"><rect x="51" y="11" width="5.6" height="5" fill="#42658c" stroke="#5eb1ef" stroke-width="1"/><circle cx="53.8" cy="20.4" r="2.7" fill="#6f7482" stroke="#b0b3ba" stroke-width="1"/><path d="M58 8.6H60.6V24.4H58" stroke="#d0d0d0" stroke-width="1" fill="none"/><path d="M59.4 13.6L64.2 18.4M64.2 13.6L59.4 18.4" stroke="#f0404c" stroke-width="1.5"/>
<path d="M50.6 33.4H48.6V47H50.6 M55.6 33.4H57.6V47H55.6" stroke="#d0d0d0" stroke-width="1" fill="none"/><rect x="50.8" y="35.6" width="4.6" height="3.6" fill="#42658c" stroke="#5eb1ef" stroke-width="1"/><circle cx="53.1" cy="43.2" r="2.2" fill="#6f7482" stroke="#b0b3ba" stroke-width="1"/>
<g transform="translate(57.4,40.4)"><path d="M0 5.6L4 1.6L6 3.6L2 7.6L-0.6 8.2Z" fill="#f5cf6e"/><path d="M4 1.6L5.2 0.4Q6 -0.2 6.8 0.6L7.2 1Q7.8 1.8 7.2 2.6L6 3.6Z" fill="#ee4d5a"/></g>
</g>
<rect x="42.8" y="54" width="23.6" height="21.4" fill="#46566f" stroke="#4f9bd9" stroke-width="1.3"/>
<path d="M51.4 58H49V71H51.4 M57 58H59.4V64" stroke="#d0d0d0" stroke-width="1" fill="none"/><rect x="51.6" y="60" width="4.8" height="3.8" fill="none" stroke="#3fcf6d" stroke-width="1.1"/><circle cx="54" cy="68" r="2.4" fill="none" stroke="#3fcf6d" stroke-width="1.1"/>
<path d="M57.2 64.8V73.4L59.4 71.4L60.8 74.4L62 73.8L60.6 70.8H63.4Z" fill="#fff"/>
</svg>
<span class="t" style="left:1185.23px;top:104.38px;font-size:13px;color:#e2e2e2;transform:scaleX(0.9514);transform-origin:0 0;">Group</span>
<span class="t" style="left:1188.33px;top:141.88px;font-size:13px;color:#e2e2e2;transform:scaleX(0.9446);transform-origin:0 0;">Groups</span><svg style="left:1234.6px;top:145.1px" width="7.4" height="4.3" viewBox="0 0 7.4 4.3"><path d="M0 0H7.4L3.7 4.3Z" fill="#dcdcdc"/></svg>
<svg style="left:1250px;top:57px;" width="100" height="100" viewBox="0 0 100 100">
<rect x="21.8" y="20.6" width="29.4" height="6.8" fill="#f5cf6e"/><path d="M24.4 20.6v2.6m2.6-2.6v2.6m2.6-2.6v3.6m2.6-3.6v2.6m2.6-2.6v2.6m2.6-2.6v3.6m2.6-3.6v2.6m2.6-2.6v2.6m2.6-2.6v3.6m2.6-3.6v2.6" stroke="#b9924a" stroke-width=".8"/>
<path d="M76 12.8V22.4L78.4 20.2L80 23.8L81.4 23.2L79.8 19.6H83Z" fill="#f4f4f4"/><path d="M83 8.4L79.4 13.2H82L80.6 16.6L85 11.8H82.4L84.4 8.4Z" fill="#f5cf6e"/><rect x="82.4" y="15.4" width="9.8" height="9" fill="#f4f4f4"/><path d="M84 18h1.4m1 0h4M84 20h1.4m1 0h4M84 22h1.4m1 0h4" stroke="#4a9be8" stroke-width="1"/>
<rect x="75.6" y="33.4" width="15.4" height="14.6" fill="#2f6d4f" stroke="#3fcf6d" stroke-width="1" stroke-dasharray="1.6 1"/><rect x="80.4" y="35.4" width="8.8" height="8.4" fill="#6fd69a"/><path d="M78.2 38V46H86" stroke="#6fd69a" stroke-width="1.6" fill="none"/><path d="M86 40.6V49.6L88.2 47.6L89.8 51L91.2 50.4L89.6 47H92.6Z" fill="#f4f4f4"/>
<rect x="77.6" y="57" width="11.6" height="16.6" rx="1" fill="#dedede"/><rect x="79.2" y="58.8" width="8.4" height="3" fill="#8a8a8a"/><path d="M79.2 64.4h2.2m1 0h2.2m1 0h2.2M79.2 67.6h2.2m1 0h2.2m1 0h2.2M79.2 70.8h2.2m1 0h2.2m1 0h2.2" stroke="#7a7a7a" stroke-width="1.8"/>
</svg>
<span class="t" style="left:1262.69px;top:104.08px;font-size:13px;color:#e2e2e2;transform:scaleX(0.9182);transform-origin:0 0;">Measure</span>
<svg style="left:1283.5px;top:121.2px" width="5.6" height="3" viewBox="0 0 5.6 3"><path d="M0 0H5.6L2.8 3Z" fill="#dcdcdc"/></svg>
<span class="t" style="left:1272.75px;top:141.68px;font-size:13px;color:#e2e2e2;transform:scaleX(0.9480);transform-origin:0 0;">Utilities</span><svg style="left:1318.5px;top:144.9px" width="7.4" height="4.3" viewBox="0 0 7.4 4.3"><path d="M0 0H7.4L3.7 4.3Z" fill="#dcdcdc"/></svg>
<div class="abs" style="left:1350.9px;top:58px;width:58.4px;height:97.2px;background:#4b566b;"></div>
<svg style="left:1350px;top:57px;" width="60" height="100" viewBox="0 0 60 100">
<rect x="17.5" y="10" width="22.8" height="24.8" fill="#dba96a"/><path d="M25 10Q25 6.4 28.9 6.4Q32.8 6.4 32.8 10Z" fill="#f2f2f2"/><rect x="23.6" y="8.6" width="10.6" height="2.4" fill="#f2f2f2"/>
<path d="M25 16.5H38L43.3 21.8V38.9H25Z" fill="#dcdcdc"/><path d="M38 16.5V21.8H43.3Z" fill="#f6f6f6"/>
</svg>
<span class="t" style="left:1352.92px;top:101.38px;font-size:13px;color:#e2e2e2;transform:scaleX(0.9667);transform-origin:0 0;">Clipboard</span>
<svg style="left:1376.9px;top:147.3px" width="7" height="3.8" viewBox="0 0 7 3.8"><path d="M0 0H7L3.5 3.8Z" fill="#dcdcdc"/></svg>
<!-- p3_left.py -->
<div class="abs" style="left:5px;top:157px;width:1431px;height:27.5px;background:#222831;"></div>
<div class="abs" style="left:5px;top:184px;width:1431px;height:4.6px;background:#3b4453;"></div>
<svg style="left:0px;top:157px;" width="300" height="30" viewBox="0 0 300 30">
<path d="M104.4 3H249.6L241 27.4H96Z" fill="#3b4453"/>
<path d="M20.2 10H37M20.2 15.3H37M20.2 20.5H37" stroke="#e8e8e8" stroke-width="1.9"/>
<path d="M47.5 23.4L53.8 7.4M284.4 23.4L290.6 7.4" stroke="#4a5262" stroke-width="1.1"/>
<rect x="112.6" y="15.2" width="9.2" height="6.8" rx="0.8" fill="#dcdcdc"/><path d="M114.6 15.4V13.4A2.6 2.6 0 0 1 119.8 13.4V15.4" stroke="#dcdcdc" stroke-width="1.4" fill="none"/><rect x="116.7" y="17.2" width="1" height="2.6" fill="#3b4453"/>
<path d="M229 12.2L236.6 19.8M236.6 12.2L229 19.8" stroke="#a9afba" stroke-width="1.6"/>
<path d="M259 15.3H273M266 8.4V22.2" stroke="#f0f0f0" stroke-width="1.9"/>
</svg>
<span class="t" style="left:62.56px;top:166.48px;font-size:13px;color:#e6e6e6;transform:scaleX(0.8951);transform-origin:0 0;">Start</span>
<span class="t" style="left:131.84px;top:166.48px;font-size:13px;color:#f2f2f2;font-weight:bold;transform:scaleX(0.9593);transform-origin:0 0;">P&amp;ID Diagram*</span>
<div class="abs" style="left:4px;top:188px;width:258px;height:694px;background:#3b4453;"></div>
<div class="abs" style="left:4.6px;top:190.6px;width:229.2px;height:23px;background:#2e3542;"></div>
<span class="t" style="left:19.33px;top:196.04px;font-size:12.5px;color:#e8e8e8;transform:scaleX(0.8726);transform-origin:0 0;">PROJECT MANAGER</span>
<div class="abs" style="left:5px;top:214px;width:229px;height:10px;border-top:1px solid #343c4a;border-radius:4px 4px 0 0"></div>
<div class="abs" style="left:233.6px;top:216px;width:23.5px;height:133px;background:#3b4453;border:1.4px solid #2b323e;border-left:none;border-bottom:none;border-radius:0 4px 0 0"></div>
<div class="abs" style="left:233.6px;top:349px;width:23.5px;height:135.6px;background:#2e3542;border:1px solid #2a303b;border-radius:0 0 4px 0"></div>
<span class="t" style="left:245.2px;top:282px;font-size:13px;color:#e6e6e6;transform:translate(-50%,-50%) rotate(-90deg) scaleX(0.9157);transform-origin:50% 50%;">Projects</span>
<span class="t" style="left:245.2px;top:415.5px;font-size:13px;color:#c4c8d0;transform:translate(-50%,-50%) rotate(-90deg) scaleX(0.9170);transform-origin:50% 50%;">Location View</span>
<svg style="left:5px;top:218px;" width="232" height="30" viewBox="0 0 232 30">
<path d="M8 8.4H13.6L15 10H22.6V21.4H8Z" fill="#d6d6d6"/><path d="M8 8.4H13.6L15 10H8Z" fill="#eee"/><path d="M17 17H20L20.8 18H24V19.4H18.4L17 24Z" fill="#e2b24a"/><path d="M18.6 19.4H25.4L23.6 24.2H17Z" fill="#f5cf6e"/>
<path d="M33 8.4H38.6L40 10H47.6V21.4H33Z" fill="#d6d6d6"/><path d="M33 8.4H38.6L40 10H33Z" fill="#eee"/><path d="M43.4 21.6H50.4M46.9 18.1V25.1" stroke="#3fd06f" stroke-width="2"/>
<rect x="58.6" y="10" width="13.4" height="15" fill="#3d6eb4" stroke="#d8d8d8" stroke-width="1"/><path d="M58.6 20L72 18V25H58.6Z" fill="#f0b63a"/><circle cx="62.6" cy="14.6" r="2.2" stroke="#e8f0ff" stroke-width=".9" fill="none"/><path d="M62.6 10.4V12.4M62.6 16.8V19M58.8 14.6H60.4M64.8 14.6H72" stroke="#e8f0ff" stroke-width=".8"/>
<g transform="translate(71.4,12.6)" fill="#f5cf6e"><circle r="2.6"/><path d="M0 -5L0.9 -2.4H-0.9ZM0 5L0.9 2.4H-0.9ZM-5 0L-2.4 -0.9V0.9ZM5 0L2.4 -0.9V0.9ZM-3.5 -3.5L-1 -2.3L-2.3 -1ZM3.5 3.5L1 2.3L2.3 1ZM3.5 -3.5L2.3 -1L1 -2.3ZM-3.5 3.5L-2.3 1L-1 2.3Z"/></g>
<g transform="translate(91.6,16.2)"><path d="M-6.2 -1.2A6.4 6.4 0 0 1 4.6 -4.4" stroke="#3fd06f" stroke-width="2.3" fill="none"/><path d="M2 -6.6L8.4 -7.6L7.4 -1.2Z" fill="#3fd06f"/><path d="M6.2 1.2A6.4 6.4 0 0 1 -4.6 4.4" stroke="#3fd06f" stroke-width="2.3" fill="none"/><path d="M-2 6.6L-8.4 7.6L-7.4 1.2Z" fill="#3fd06f"/></g>
<rect x="108.8" y="8.4" width="11.4" height="13.6" fill="#8b8f98"/><path d="M110.6 11.4h1.2m1 0h5.4M110.6 14.2h1.2m1 0h5.4M110.6 17h1.2m1 0h4" stroke="#6d7079" stroke-width="1"/><path d="M117 21L119.6 23.6L124 18.6" stroke="#8b8f98" stroke-width="1.3" fill="none"/>
<path d="M133.8 10.4H139.4L140.8 12H150V24H133.8Z" fill="#d6d6d6"/><path d="M133.8 10.4H139.4L140.8 12H133.8Z" fill="#eee"/>
<g transform="translate(142,18.2) scale(.5)"><path d="M-6.2 -1.2A6.4 6.4 0 0 1 4.6 -4.4" stroke="#3fd06f" stroke-width="2.6" fill="none"/><path d="M2 -6.6L8.4 -7.6L7.4 -1.2Z" fill="#3fd06f"/><path d="M6.2 1.2A6.4 6.4 0 0 1 -4.6 4.4" stroke="#3fd06f" stroke-width="2.6" fill="none"/><path d="M-2 6.6L-8.4 7.6L-7.4 1.2Z" fill="#3fd06f"/></g>
<rect x="158.8" y="8.4" width="11.6" height="13.4" fill="#d6d6d6"/><path d="M160.4 11.2h1.2m1 0h4.6M160.4 14h1.2m1 0h4.6M160.4 16.8h1.2m1 0h2" stroke="#8a8a8a" stroke-width="1"/><rect x="167" y="14.6" width="8.2" height="10.4" fill="#f2f2f2" stroke="#3b4453" stroke-width=".6"/><rect x="168.6" y="16.2" width="5" height="2.6" fill="#4a8fd8"/><path d="M168.8 21h4.6M168.8 23h3" stroke="#777" stroke-width=".8"/>
<rect x="186.6" y="8.4" width="8.6" height="4.6" fill="#f2f2f2"/><rect x="183.4" y="12" width="15" height="8" rx="1" fill="#e2e2e2"/><rect x="186" y="17" width="9.4" height="6.6" fill="#f4f4f4"/><rect x="187" y="18.4" width="4.4" height="3.6" fill="#58b0f0"/>
<circle cx="195.4" cy="20.8" r="4.6" fill="#3d78c2" stroke="#7db4ea" stroke-width=".8"/><path d="M190.8 20.8H200M195.4 16.2V25.4" stroke="#9ccaf2" stroke-width=".7"/><ellipse cx="195.4" cy="20.8" rx="2.2" ry="4.6" stroke="#9ccaf2" stroke-width=".7" fill="none"/>
<path d="M204 15.3H214L209 20.8Z" fill="#d8d8d8"/>
</svg>
<div class="abs" style="left:224px;top:226px;width:10px;height:17px;overflow:hidden"><div style="position:absolute;left:0;top:0;width:17px;height:17px;border-radius:9px;background:#d8d8d8"></div><span class="t" style="left:5.2px;top:2.6px;font-size:12.5px;color:#8a8a8a">?</span></div>
<div class="abs" style="left:13.6px;top:250.8px;width:211.2px;height:17.4px;background:#4b566b;"></div>
<span class="t" style="left:15.46px;top:254.33px;font-size:12.6px;color:#e4e4e4;transform:scaleX(0.9405);transform-origin:0 0;">NFPADEMO</span>
<svg style="left:211.9px;top:258.2px" width="11" height="5.6" viewBox="0 0 11 5.6"><path d="M0 0H11L5.5 5.6Z" fill="#dcdcdc"/></svg>
<div class="abs" style="left:12px;top:274px;width:214px;height:22.4px;background:#2b313d;border-radius:3px 3px 0 0;border:1px solid #262b35;border-bottom:2px solid #232934"></div>
<span class="t" style="left:21.74px;top:278.93px;font-size:12.6px;color:#f4f4f4;font-weight:bold;transform:scaleX(0.9463);transform-origin:0 0;">Projects</span>
<svg style="left:210.3px;top:282.8px" width="8.4" height="4.5" viewBox="0 0 8.4 4.5"><path d="M0 0H8.4L4.2 4.5Z" fill="#e2e2e2"/></svg>
<div class="abs" style="left:12px;top:296px;width:214px;height:209.4px;background:#3b4453;border:1px solid #2a303b;border-top:none"></div>
<span class="t" style="left:52.99px;top:302.81px;font-size:12px;color:#f4f4f4;font-weight:bold;transform:scaleX(1.0166);transform-origin:0 0;">NFPADEMO</span>
<span class="t" style="left:52.87px;top:323.01px;font-size:12px;color:#e0e0e0;transform:scaleX(0.9269);transform-origin:0 0;">EXTRA LIBRARY DEMO</span>
<span class="t" style="left:53.23px;top:343.21px;font-size:12px;color:#e0e0e0;transform:scaleX(0.9464);transform-origin:0 0;">GBDEMO</span>
<span class="t" style="left:52.73px;top:363.41px;font-size:12px;color:#e0e0e0;transform:scaleX(0.9726);transform-origin:0 0;">IEC60617DEMO</span>
<span class="t" style="left:52.76px;top:383.61px;font-size:12px;color:#e0e0e0;transform:scaleX(0.9449);transform-origin:0 0;">IECDEMO</span>
<span class="t" style="left:52.80px;top:403.81px;font-size:12px;color:#e0e0e0;transform:scaleX(0.9092);transform-origin:0 0;">IEEEDEMO</span>
<span class="t" style="left:53.61px;top:424.01px;font-size:12px;color:#e0e0e0;transform:scaleX(0.9278);transform-origin:0 0;">JISDEMO</span>
<span class="t" style="left:52.84px;top:444.21px;font-size:12px;color:#e0e0e0;transform:scaleX(0.9556);transform-origin:0 0;">POINT2POINT</span>
<span class="t" style="left:53.70px;top:464.41px;font-size:12px;color:#e0e0e0;transform:scaleX(0.9928);transform-origin:0 0;">WDDEMO</span>
<svg style="left:0px;top:0px;" width="240" height="520" viewBox="0 0 240 520"><path d="M24 313V470" stroke="#7b808c" stroke-width="1" stroke-dasharray="1 1"/><rect x="19.6" y="304.1" width="8.8" height="8.8" fill="#3b4453" stroke="#9a9fa9" stroke-width="1"/><path d="M21.6 308.5H26.4M24 306.1V310.9" stroke="#e4e4e4" stroke-width="1"/><path d="M28.6 308.5H33" stroke="#7b808c" stroke-width="1" stroke-dasharray="1 1"/><g transform="translate(33.7,299.3)"><path d="M0 0.4H5.4L6.6 1.8H14.2V12.6H0Z" fill="#d4d4d4"/><path d="M0 0.4H5.4L6.6 1.8H0Z" fill="#ededed"/><path d="M8.2 6.2H13.6L16.5 9.1V16.2H8.2Z" fill="#dedede" stroke="#3b4453" stroke-width=".7"/><path d="M13.6 6.2V9.1H16.5Z" fill="#f6f6f6"/></g><rect x="19.6" y="324.3" width="8.8" height="8.8" fill="#3b4453" stroke="#9a9fa9" stroke-width="1"/><path d="M21.6 328.7H26.4M24 326.3V331.1" stroke="#e4e4e4" stroke-width="1"/><path d="M28.6 328.7H33" stroke="#7b808c" stroke-width="1" stroke-dasharray="1 1"/><g transform="translate(33.7,319.5)"><path d="M0 0.4H5.4L6.6 1.8H14.2V12.6H0Z" fill="#d4d4d4"/><path d="M0 0.4H5.4L6.6 1.8H0Z" fill="#ededed"/><path d="M8.2 6.2H13.6L16.5 9.1V16.2H8.2Z" fill="#dedede" stroke="#3b4453" stroke-width=".7"/><path d="M13.6 6.2V9.1H16.5Z" fill="#f6f6f6"/></g><rect x="19.6" y="344.5" width="8.8" height="8.8" fill="#3b4453" stroke="#9a9fa9" stroke-width="1"/><path d="M21.6 348.9H26.4M24 346.5V351.3" stroke="#e4e4e4" stroke-width="1"/><path d="M28.6 348.9H33" stroke="#7b808c" stroke-width="1" stroke-dasharray="1 1"/><g transform="translate(33.7,339.7)"><path d="M0 0.4H5.4L6.6 1.8H14.2V12.6H0Z" fill="#d4d4d4"/><path d="M0 0.4H5.4L6.6 1.8H0Z" fill="#ededed"/><path d="M8.2 6.2H13.6L16.5 9.1V16.2H8.2Z" fill="#dedede" stroke="#3b4453" stroke-width=".7"/><path d="M13.6 6.2V9.1H16.5Z" fill="#f6f6f6"/></g><rect x="19.6" y="364.7" width="8.8" height="8.8" fill="#3b4453" stroke="#9a9fa9" stroke-width="1"/><path d="M21.6 369.1H26.4M24 366.7V371.5" stroke="#e4e4e4" stroke-width="1"/><path d="M28.6 369.1H33" stroke="#7b808c" stroke-width="1" stroke-dasharray="1 1"/><g transform="translate(33.7,359.90000000000003)"><path d="M0 0.4H5.4L6.6 1.8H14.2V12.6H0Z" fill="#d4d4d4"/><path d="M0 0.4H5.4L6.6 1.8H0Z" fill="#ededed"/><path d="M8.2 6.2H13.6L16.5 9.1V16.2H8.2Z" fill="#dedede" stroke="#3b4453" stroke-width=".7"/><path d="M13.6 6.2V9.1H16.5Z" fill="#f6f6f6"/></g><rect x="19.6" y="384.9" width="8.8" height="8.8" fill="#3b4453" stroke="#9a9fa9" stroke-width="1"/><path d="M21.6 389.3H26.4M24 386.9V391.7" stroke="#e4e4e4" stroke-width="1"/><path d="M28.6 389.3H33" stroke="#7b808c" stroke-width="1" stroke-dasharray="1 1"/><g transform="translate(33.7,380.1)"><path d="M0 0.4H5.4L6.6 1.8H14.2V12.6H0Z" fill="#d4d4d4"/><path d="M0 0.4H5.4L6.6 1.8H0Z" fill="#ededed"/><path d="M8.2 6.2H13.6L16.5 9.1V16.2H8.2Z" fill="#dedede" stroke="#3b4453" stroke-width=".7"/><path d="M13.6 6.2V9.1H16.5Z" fill="#f6f6f6"/></g><rect x="19.6" y="405.1" width="8.8" height="8.8" fill="#3b4453" stroke="#9a9fa9" stroke-width="1"/><path d="M21.6 409.5H26.4M24 407.1V411.9" stroke="#e4e4e4" stroke-width="1"/><path d="M28.6 409.5H33" stroke="#7b808c" stroke-width="1" stroke-dasharray="1 1"/><g transform="translate(33.7,400.3)"><path d="M0 0.4H5.4L6.6 1.8H14.2V12.6H0Z" fill="#d4d4d4"/><path d="M0 0.4H5.4L6.6 1.8H0Z" fill="#ededed"/><path d="M8.2 6.2H13.6L16.5 9.1V16.2H8.2Z" fill="#dedede" stroke="#3b4453" stroke-width=".7"/><path d="M13.6 6.2V9.1H16.5Z" fill="#f6f6f6"/></g><rect x="19.6" y="425.3" width="8.8" height="8.8" fill="#3b4453" stroke="#9a9fa9" stroke-width="1"/><path d="M21.6 429.7H26.4M24 427.3V432.1" stroke="#e4e4e4" stroke-width="1"/><path d="M28.6 429.7H33" stroke="#7b808c" stroke-width="1" stroke-dasharray="1 1"/><g transform="translate(33.7,420.5)"><path d="M0 0.4H5.4L6.6 1.8H14.2V12.6H0Z" fill="#d4d4d4"/><path d="M0 0.4H5.4L6.6 1.8H0Z" fill="#ededed"/><path d="M8.2 6.2H13.6L16.5 9.1V16.2H8.2Z" fill="#dedede" stroke="#3b4453" stroke-width=".7"/><path d="M13.6 6.2V9.1H16.5Z" fill="#f6f6f6"/></g><rect x="19.6" y="445.5" width="8.8" height="8.8" fill="#3b4453" stroke="#9a9fa9" stroke-width="1"/><path d="M21.6 449.9H26.4M24 447.5V452.3" stroke="#e4e4e4" stroke-width="1"/><path d="M28.6 449.9H33" stroke="#7b808c" stroke-width="1" stroke-dasharray="1 1"/><g transform="translate(33.7,440.7)"><path d="M0 0.4H5.4L6.6 1.8H14.2V12.6H0Z" fill="#d4d4d4"/><path d="M0 0.4H5.4L6.6 1.8H0Z" fill="#ededed"/><path d="M8.2 6.2H13.6L16.5 9.1V16.2H8.2Z" fill="#dedede" stroke="#3b4453" stroke-width=".7"/><path d="M13.6 6.2V9.1H16.5Z" fill="#f6f6f6"/></g><rect x="19.6" y="465.7" width="8.8" height="8.8" fill="#3b4453" stroke="#9a9fa9" stroke-width="1"/><path d="M21.6 470.1H26.4M24 467.7V472.5" stroke="#e4e4e4" stroke-width="1"/><path d="M28.6 470.1H33" stroke="#7b808c" stroke-width="1" stroke-dasharray="1 1"/><g transform="translate(33.7,460.90000000000003)"><path d="M0 0.4H5.4L6.6 1.8H14.2V12.6H0Z" fill="#d4d4d4"/><path d="M0 0.4H5.4L6.6 1.8H0Z" fill="#ededed"/><path d="M8.2 6.2H13.6L16.5 9.1V16.2H8.2Z" fill="#dedede" stroke="#3b4453" stroke-width=".7"/><path d="M13.6 6.2V9.1H16.5Z" fill="#f6f6f6"/></g></svg>
<div class="abs" style="left:12px;top:506px;width:214px;height:8px;background:#2e3542;border-radius:4px"></div>
<svg style="left:109px;top:509px;" width="20" height="3" viewBox="0 0 20 3"><path d="M0.6 1.4H19" stroke="#f0f0f0" stroke-width="1.6" stroke-dasharray="1.6 2.4"/></svg>
<div class="abs" style="left:12px;top:515px;width:214px;height:22.4px;background:#2b313d;border-radius:3px 3px 0 0;border:1px solid #262b35;border-bottom:2px solid #232934"></div>
<span class="t" style="left:21.82px;top:519.83px;font-size:12.6px;color:#f4f4f4;font-weight:bold;transform:scaleX(0.9750);transform-origin:0 0;">Details</span>
<svg style="left:170px;top:518px;" width="40" height="14" viewBox="0 0 40 14"><path d="M2 1.6H7L9.6 4.2V11.4H2Z" fill="#d6d6d6"/><path d="M5.4 5.2H10.6V9H5.4Z" fill="#d6d6d6" stroke="#2b313d" stroke-width=".7"/><rect x="18" y="2" width="10.6" height="8.6" fill="#c9c9c9"/><path d="M18 9L21.6 5.6L24.6 8.2L26.4 6.8L28.6 8.6V10.6H18Z" fill="#9a9a9a"/></svg>
<svg style="left:210.3px;top:523.4px" width="8.4" height="4.5" viewBox="0 0 8.4 4.5"><path d="M0 0H8.4L4.2 4.5Z" fill="#e2e2e2"/></svg>
<div class="abs" style="left:12px;top:537px;width:214px;height:326.6px;background:#3b4453;border:1px solid #2a303b;border-top:none"></div>
<div class="abs" style="left:5px;top:873px;width:227px;height:1px;background:#353d4b;"></div>
<!-- p4_canvas.py -->
<div class="abs" style="left:262px;top:188px;width:1174px;height:625px;background:#212830;overflow:hidden"><svg style="left:0;top:0" width="1174" height="625" viewBox="262 188 1174 625"><g style="font-family:'Liberation Sans',sans-serif"><circle cx="257.0" cy="199.5" r="19.6" stroke="#d8d8d8" stroke-width="1.1" fill="none"/><path d="M261.0 256.7L267.5 256.7L267.5 276.8L261.0 276.8" stroke="#d8d8d8" stroke-width="1.1" fill="none" /><circle cx="411.6" cy="199.2" r="19.65" stroke="#d8d8d8" stroke-width="1.1" fill="none"/><text x="406.7" y="194.0" font-size="6.98" fill="#1574e6" stroke="#1574e6" stroke-width="0.25" textLength="9.1" lengthAdjust="spacingAndGlyphs">FSL</text><text x="407.2" y="210.2" font-size="7.54" fill="#1574e6" stroke="#1574e6" stroke-width="0.25" textLength="8.8" lengthAdjust="spacingAndGlyphs">102</text><path d="M411.6 218.8L411.6 257.0" stroke="#c6c200" stroke-width="1.2" fill="none" /><rect x="401.1" y="256.7" width="20.6" height="20.1" stroke="#d8d8d8" stroke-width="1.1" fill="none"/><path d="M409.4 258.4L413.6 275.4" stroke="#d8d8d8" stroke-width="1" fill="none" /><path d="M413.8 258.4L409.6 275.4" stroke="#d8d8d8" stroke-width="1" fill="none" /><path d="M409.4 275.4L413.8 275.4" stroke="#d8d8d8" stroke-width="0.8" fill="none" /><circle cx="411.6" cy="260.4" r="1.6" stroke="#d8d8d8" stroke-width="0.8" fill="none"/><text x="385.8" y="255.9" font-size="7.82" fill="#1574e6" stroke="#1574e6" stroke-width="0.25" textLength="8.3" lengthAdjust="spacingAndGlyphs">F2</text><text x="299.8" y="294.7" font-size="7.40" fill="#1574e6" stroke="#1574e6" stroke-width="0.25" textLength="24.3" lengthAdjust="spacingAndGlyphs">E-100</text><circle cx="334.8" cy="315.2" r="19.75" stroke="#d8d8d8" stroke-width="1.1" fill="none"/><circle cx="325.2" cy="328.6" r="3.0" stroke="#d8d8d8" stroke-width="1" fill="none"/><circle cx="331.5" cy="331.2" r="3.0" stroke="#d8d8d8" stroke-width="1" fill="none"/><circle cx="338.0" cy="331.2" r="3.0" stroke="#d8d8d8" stroke-width="1" fill="none"/><circle cx="344.3" cy="328.4" r="3.0" stroke="#d8d8d8" stroke-width="1" fill="none"/><text x="354.3" y="337.7" font-size="7.40" fill="#1574e6" stroke="#1574e6" stroke-width="0.25" textLength="36.7" lengthAdjust="spacingAndGlyphs">BALL MILL</text><path d="M354.5 315.3L623.4 315.3L623.4 349.3" stroke="#c41a1a" stroke-width="1.2" fill="none" /><path d="M623.0 315.3L617.0 312.1L617.0 318.5Z" fill="#ffffff"/><path d="M623.4 349.3L623.4 364.0" stroke="#d8d8d8" stroke-width="1.1" fill="none" /><path d="M623.4 369.4L620.1 362.0L626.7 362.0Z" fill="#ffffff"/><path d="M623.4 373.8L620.4 365.8L626.4 365.8Z" fill="#ffffff"/><rect x="613.5" y="376.3" width="107.6" height="20.5" stroke="#d8d8d8" stroke-width="1.2" fill="none"/><path d="M613.5 396.8L623.3 376.3L633.1 396.8L642.8 376.3L652.6 396.8L662.4 376.3L672.2 396.8L682.0 376.3L691.8 396.8L701.5 376.3L711.3 396.8L721.1 376.3" stroke="#d8d8d8" stroke-width="1" fill="none" /><text x="653.9" y="373.2" font-size="7.40" fill="#1574e6" stroke="#1574e6" stroke-width="0.25" textLength="25.3" lengthAdjust="spacingAndGlyphs">M-100</text><text x="724.6" y="390.8" font-size="7.54" fill="#1574e6" stroke="#1574e6" stroke-width="0.25" textLength="37.1" lengthAdjust="spacingAndGlyphs">CONVEYOR</text><path d="M710.7 400.8L710.7 415.0" stroke="#d8d8d8" stroke-width="1.1" fill="none" /><path d="M710.7 420.4L707.4 413.2L714.0 413.2Z" fill="#ffffff"/><path d="M710.7 425.0L707.7 417.0L713.7 417.0Z" fill="#ffffff"/><path d="M710.8 424.9L710.8 440.4L923.3 440.4" stroke="#c41a1a" stroke-width="1.2" fill="none" /><text x="366.5" y="351.4" font-size="6.70" fill="#1574e6" stroke="#1574e6" stroke-width="0.25" textLength="8.4" lengthAdjust="spacingAndGlyphs">N1</text><path d="M353.1 363.4L367.6 363.4" stroke="#d8d8d8" stroke-width="1.1" fill="none" /><path d="M367.6 353.6L367.6 373.5" stroke="#d8d8d8" stroke-width="1.2" fill="none" /><path d="M373.2 353.6L373.2 373.5" stroke="#d8d8d8" stroke-width="1.2" fill="none" /><text x="373.7" y="378.8" font-size="7.68" fill="#1574e6" stroke="#1574e6" stroke-width="0.25" textLength="27.4" lengthAdjust="spacingAndGlyphs">NOZZLE</text><path d="M373.2 363.4L450.6 363.4L450.6 460.0L461.0 460.0" stroke="#c6c200" stroke-width="1.2" fill="none" /><path d="M450.5 363.4L444.9 373.8L456.1 373.8Z" fill="#ffffff"/><path d="M461.0 460.0L763.4 460.0" stroke="#c6c200" stroke-width="1.2" fill="none" /><path d="M451.4 460.0L462.0 454.7L462.0 465.3Z" fill="#ffffff"/><path d="M373.2 387.0L373.2 474.4L566.3 474.4L566.3 490.0" stroke="#12bd12" stroke-width="1.3" fill="none" /><path d="M373.2 382.2L370.1 388.0L376.3 388.0Z" fill="#ffffff"/><path d="M373.8 474.4L379.8 471.5L379.8 477.3Z" fill="#ffffff"/><path d="M369.0 447.2L376.8 451.0" stroke="#12bd12" stroke-width="1" fill="none" /><path d="M369.4 449.4L377.2 453.2" stroke="#12bd12" stroke-width="1" fill="none" /><path d="M438.8 478.2L443.6 470.4" stroke="#12bd12" stroke-width="1" fill="none" /><path d="M441.0 478.2L445.8 470.4" stroke="#12bd12" stroke-width="1" fill="none" /><path d="M488.2 478.2L493.0 470.4" stroke="#12bd12" stroke-width="1" fill="none" /><path d="M490.4 478.2L495.2 470.4" stroke="#12bd12" stroke-width="1" fill="none" /><path d="M538.0 478.2L542.8 470.4" stroke="#12bd12" stroke-width="1" fill="none" /><path d="M540.2 478.2L545.0 470.4" stroke="#12bd12" stroke-width="1" fill="none" /><path d="M566.3 478.0L563.3 483.6L569.3 483.6Z" fill="#ffffff"/><path d="M556.6 490.1H576.0L556.6 519.3H576.0Z" stroke="#d8d8d8" stroke-width="1.1" fill="none" stroke-linejoin="miter"/><rect x="536.2" y="499.3" width="10.6" height="10.4" stroke="#d8d8d8" stroke-width="1" fill="none"/><path d="M542.8 503.0h-1.8q-0.9 0 -0.9 0.8q0 0.7 0.9 0.7h0.9q0.9 0 0.9 0.8q0 0.8 -0.9 0.8h-1.9" stroke="#f2f2f2" stroke-width="0.9" fill="none"/><path d="M546.8 504.8L566.3 504.8" stroke="#d8d8d8" stroke-width="1.1" fill="none" /><path d="M541.5 509.7L541.5 527.4L517.6 527.4" stroke="#12bd12" stroke-width="1.3" fill="none" /><circle cx="498.0" cy="527.2" r="19.6" stroke="#d8d8d8" stroke-width="1.1" fill="none"/><text x="494.6" y="522.1" font-size="7.40" fill="#1574e6" stroke="#1574e6" stroke-width="0.25" textLength="6.9" lengthAdjust="spacingAndGlyphs">SV</text><text x="493.4" y="538.1" font-size="7.82" fill="#1574e6" stroke="#1574e6" stroke-width="0.25" textLength="9.3" lengthAdjust="spacingAndGlyphs">225</text><path d="M566.3 519.5L566.3 532.1" stroke="#12bd12" stroke-width="1.4" fill="none" /><path d="M556.1 532.6H576.1L556.1 561.4H576.1Z" stroke="#d8d8d8" stroke-width="1.1" fill="none" stroke-linejoin="miter"/><path d="M566.3 546.5L584.7 546.5" stroke="#d8d8d8" stroke-width="1.1" fill="none" /><path d="M584.7 537V556.7Q590.6 553.6 590.6 546.8Q590.6 540.2 584.7 537Z" stroke="#d8d8d8" stroke-width="1.1" fill="none"/><path d="M590.6 546.5L600.4 546.5L600.4 561.6L584.4 561.6L566.3 546.5" stroke="#d8d8d8" stroke-width="1.1" fill="none" /><path d="M600.4 546.5L623.4 546.5" stroke="#12bd12" stroke-width="1.3" fill="none" /><circle cx="643.2" cy="547.0" r="19.6" stroke="#d8d8d8" stroke-width="1.1" fill="none"/><text x="637.2" y="541.9" font-size="7.40" fill="#1574e6" stroke="#1574e6" stroke-width="0.25" textLength="12.0" lengthAdjust="spacingAndGlyphs">PICV</text><text x="638.4" y="557.9" font-size="7.82" fill="#1574e6" stroke="#1574e6" stroke-width="0.25" textLength="9.6" lengthAdjust="spacingAndGlyphs">222</text><path d="M566.3 561.6L566.3 677.0" stroke="#12bd12" stroke-width="1.4" fill="none" /><path d="M562.1 572.0L569.9 575.8" stroke="#12bd12" stroke-width="1" fill="none" /><path d="M562.5 574.2L570.3 578.0" stroke="#12bd12" stroke-width="1" fill="none" /><path d="M562.1 622.2L569.9 626.0" stroke="#12bd12" stroke-width="1" fill="none" /><path d="M562.5 624.4L570.3 628.2" stroke="#12bd12" stroke-width="1" fill="none" /><path d="M426.2 546.5V566.1L456.0 546.5V566.1Z" stroke="#d8d8d8" stroke-width="1.1" fill="none"/><path d="M456.0 556.3L527.6 556.3L527.6 599.5" stroke="#12bd12" stroke-width="1.3" fill="none" /><path d="M507.2 560.1L512.0 552.3" stroke="#12bd12" stroke-width="1" fill="none" /><path d="M509.4 560.1L514.2 552.3" stroke="#12bd12" stroke-width="1" fill="none" /><path d="M479.0 556.3L479.0 590.0" stroke="#12bd12" stroke-width="1.3" fill="none" /><circle cx="479" cy="556.3" r="1.5" fill="#fff"/><circle cx="479.1" cy="609.6" r="19.6" stroke="#d8d8d8" stroke-width="1.1" fill="none"/><text x="476.8" y="604.5" font-size="7.40" fill="#1574e6" stroke="#1574e6" stroke-width="0.25" textLength="4.6" lengthAdjust="spacingAndGlyphs">PI</text><text x="474.9" y="620.5" font-size="7.82" fill="#1574e6" stroke="#1574e6" stroke-width="0.25" textLength="8.4" lengthAdjust="spacingAndGlyphs">221</text><path d="M517.4 599.6H537.0L517.4 629.0H537.0Z" stroke="#d8d8d8" stroke-width="1.1" fill="none" stroke-linejoin="miter"/><path d="M527.2 629.0L527.2 677.0" stroke="#12bd12" stroke-width="1.3" fill="none" /><circle cx="643.2" cy="609.6" r="19.6" stroke="#d8d8d8" stroke-width="1.1" fill="none"/><text x="637.2" y="604.5" font-size="7.40" fill="#1574e6" stroke="#1574e6" stroke-width="0.25" textLength="12.0" lengthAdjust="spacingAndGlyphs">PICV</text><text x="638.4" y="620.5" font-size="7.82" fill="#1574e6" stroke="#1574e6" stroke-width="0.25" textLength="9.6" lengthAdjust="spacingAndGlyphs">220</text><path d="M643.3 629.2L643.3 643.0" stroke="#12bd12" stroke-width="1.3" fill="none" /><path d="M643.3 642.9L657.6 642.9L657.6 657.8L643.3 677.0" stroke="#d8d8d8" stroke-width="1.1" fill="none" /><path d="M643.3 642.9L643.3 677.0" stroke="#d8d8d8" stroke-width="1.1" fill="none" /><path d="M633.5 657.8H653Q650.6 652.4 643.3 652.4Q636 652.4 633.5 657.8Z" stroke="#d8d8d8" stroke-width="1.1" fill="none"/><path d="M628.5 667.2V686.8L658.1 667.2V686.8Z" stroke="#d8d8d8" stroke-width="1.1" fill="none"/><path d="M392.2 735.3L392.2 677.0L435.3 677.0" stroke="#12bd12" stroke-width="1.3" fill="none" /><path d="M388.0 721.8L395.8 725.6" stroke="#12bd12" stroke-width="1" fill="none" /><path d="M388.4 724.0L396.2 727.8" stroke="#12bd12" stroke-width="1" fill="none" /><path d="M435.3 667.2V686.8L464.7 667.2V686.8Z" stroke="#d8d8d8" stroke-width="1.1" fill="none"/><circle cx="450" cy="677.0" r="5" fill="#fff"/><path d="M464.6 677.0L489.4 677.0" stroke="#12bd12" stroke-width="1.3" fill="none" /><path d="M489.4 677.0L494.4 677.0" stroke="#9a9a9a" stroke-width="1.3" fill="none" /><path d="M512.1 677.0L516.7 677.0" stroke="#9a9a9a" stroke-width="1.3" fill="none" /><path d="M494.4 677.0L503.2 667.4L512.1 677.0L503.2 686.4L494.4 677.0" stroke="#d8d8d8" stroke-width="1.1" fill="none" /><path d="M503.2 669.0L503.2 685.0" stroke="#d8d8d8" stroke-width="1" fill="none" stroke-dasharray="1.6 1.4"/><path d="M516.7 677.0L628.5 677.0" stroke="#12bd12" stroke-width="1.3" fill="none" /><circle cx="527.1" cy="677.0" r="1.5" fill="#fff"/><circle cx="566.1" cy="677.0" r="1.6" fill="#fff"/><path d="M564.0 680.8L568.8 673.0" stroke="#12bd12" stroke-width="1" fill="none" /><path d="M566.2 680.8L571.0 673.0" stroke="#12bd12" stroke-width="1" fill="none" /><path d="M614.1 680.8L618.9 673.0" stroke="#12bd12" stroke-width="1" fill="none" /><path d="M616.3 680.8L621.1 673.0" stroke="#12bd12" stroke-width="1" fill="none" /><path d="M658.0 677.0L693.9 677.0L693.9 712.1L763.2 712.1" stroke="#12bd12" stroke-width="1.3" fill="none" /><path d="M706.2 715.9L711.0 708.1" stroke="#12bd12" stroke-width="1" fill="none" /><path d="M708.4 715.9L713.2 708.1" stroke="#12bd12" stroke-width="1" fill="none" /><path d="M392.2 735.3L404.8 746.0L404.8 812.0L379.6 812.0L379.6 746.0L392.2 735.3" stroke="#d8d8d8" stroke-width="1.1" fill="none" /><text x="388.3" y="782.0" font-size="6.70" fill="#1574e6" stroke="#1574e6" stroke-width="0.25" textLength="7.6" lengthAdjust="spacingAndGlyphs">AIR</text><path d="M763.4 459.9L757.9 470.1L768.9 470.1Z" fill="#ffffff"/><path d="M763.5 470.0L763.5 544.3" stroke="#c6c200" stroke-width="1.2" fill="none" /><path d="M763.5 513.2L864.7 513.2" stroke="#c6c200" stroke-width="1.2" fill="none" /><circle cx="763.5" cy="513.2" r="1.4" fill="#fff"/><circle cx="884.5" cy="512.9" r="19.6" stroke="#d8d8d8" stroke-width="1.1" fill="none"/><text x="881.8" y="507.8" font-size="7.40" fill="#1574e6" stroke="#1574e6" stroke-width="0.25" textLength="5.5" lengthAdjust="spacingAndGlyphs">PI</text><text x="879.9" y="523.8" font-size="7.82" fill="#1574e6" stroke="#1574e6" stroke-width="0.25" textLength="9.3" lengthAdjust="spacingAndGlyphs">333</text><path d="M754 544.4H773.8L754 573.7H773.8Z" stroke="#d8d8d8" stroke-width="1.1" fill="none"/><path d="M763.5 559.3L778.8 549.3V568.8Z" stroke="#d8d8d8" stroke-width="1.1" fill="none"/><rect x="734.0" y="554.2" width="11.0" height="10.5" stroke="#d8d8d8" stroke-width="1" fill="none"/><path d="M740.8 558.0h-1.8q-0.9 0 -0.9 0.8q0 0.7 0.9 0.7h0.9q0.9 0 0.9 0.8q0 0.8 -0.9 0.8h-1.9" stroke="#f2f2f2" stroke-width="0.9" fill="none"/><path d="M745.0 559.5L763.5 559.5" stroke="#d8d8d8" stroke-width="1.1" fill="none" /><path d="M778.8 559.5L802.4 559.5L802.4 792.4" stroke="#c6c200" stroke-width="1.2" fill="none" /><path d="M802.3 802.8L796.7 792.4L807.9 792.4Z" fill="#ffffff"/><path d="M740.1 564.7L740.1 610.0L720.5 610.0" stroke="#b8ae14" stroke-width="1.7" fill="none" /><circle cx="700.9" cy="610.1" r="19.6" stroke="#d8d8d8" stroke-width="1.1" fill="none"/><text x="697.3" y="605.0" font-size="7.40" fill="#1574e6" stroke="#1574e6" stroke-width="0.25" textLength="7.2" lengthAdjust="spacingAndGlyphs">SV</text><text x="696.0" y="621.0" font-size="7.82" fill="#1574e6" stroke="#1574e6" stroke-width="0.25" textLength="9.8" lengthAdjust="spacingAndGlyphs">350</text><path d="M763.5 573.7L763.5 589.0" stroke="#c6c200" stroke-width="1.2" fill="none" /><path d="M763.5 589.0L763.5 594.7" stroke="#d8d8d8" stroke-width="1.1" fill="none" /><path d="M763.5 594.7L775.8 606.7L763.5 618.9L751.6 606.7L763.5 594.7" stroke="#d8d8d8" stroke-width="1.1" fill="none" /><path d="M752.6 606.7L775.0 606.7" stroke="#d8d8d8" stroke-width="1" fill="none" stroke-dasharray="2.2 1.4"/><path d="M763.5 618.9L763.5 624.2" stroke="#d8d8d8" stroke-width="1.1" fill="none" /><path d="M763.5 624.2L763.5 632.0" stroke="#c6c200" stroke-width="1.2" fill="none" /><path d="M763.5 632.0L763.5 646.0" stroke="#d8d8d8" stroke-width="1.1" fill="none" /><circle cx="763.5" cy="650.9" r="4.8" stroke="#d8d8d8" stroke-width="1.1" fill="none"/><path d="M754.0 647.4L763.5 656.2L773.8 647.4" stroke="#d8d8d8" stroke-width="1" fill="none" /><path d="M763.5 656.2L763.5 670.0" stroke="#d8d8d8" stroke-width="1.1" fill="none" /><path d="M763.5 670.0L763.5 703.4" stroke="#c6c200" stroke-width="1.2" fill="none" /><text x="743.9" y="701.8" font-size="8.10" fill="#1574e6" stroke="#1574e6" stroke-width="0.25" textLength="18.5" lengthAdjust="spacingAndGlyphs">P300</text><circle cx="773.4" cy="711.6" r="10.15" stroke="#d8d8d8" stroke-width="1.1" fill="none"/><circle cx="763.6" cy="703.6" r="1.2" fill="#eee"/><path d="M773.5 710.6L771.3 713.2L775.7 713.2Z" fill="#eee"/><path d="M773.5 712.0L773.5 726.0" stroke="#d8d8d8" stroke-width="1.2" fill="none" /><path d="M773.5 726.0L773.5 792.8" stroke="#b8ae14" stroke-width="1.6" fill="none" /><text x="708.8" y="752.2" font-size="15.36" fill="#1d63b6" stroke="#1d63b6" stroke-width="0.25" textLength="23.3" lengthAdjust="spacingAndGlyphs">TK1</text><path d="M738.5 758.1L738.5 814.0" stroke="#d8d8d8" stroke-width="1.1" fill="none" /><path d="M835.5 758.1L835.5 814.0" stroke="#d8d8d8" stroke-width="1.1" fill="none" /><path d="M744.0 759.0L744.0 768.8L830.0 768.8L830.0 759.0" stroke="#b0b0b0" stroke-width="1.5" fill="none" /><rect x="951.3" y="170" width="40.1" height="44.3" stroke="#d8d8d8" stroke-width="1.2" fill="none"/><circle cx="971.3" cy="194.4" r="19.9" stroke="#d8d8d8" stroke-width="1.1" fill="none"/><path d="M951.3 193.3L991.4 193.3" stroke="#d8d8d8" stroke-width="1" fill="none" /><path d="M951.3 195.5L991.4 195.5" stroke="#d8d8d8" stroke-width="1" fill="none" /><text x="967.5" y="205.7" font-size="8.10" fill="#1574e6" stroke="#1574e6" stroke-width="0.25" textLength="8.2" lengthAdjust="spacingAndGlyphs">101</text><text x="967.0" y="189.4" font-size="7.82" fill="#1574e6" stroke="#1574e6" stroke-width="0.25" textLength="8.6" lengthAdjust="spacingAndGlyphs">TIC</text><circle cx="971.3" cy="233.7" r="19.5" stroke="#d8d8d8" stroke-width="1.1" fill="none"/><path d="M951.3 232.4L991.4 232.4" stroke="#d8d8d8" stroke-width="1" fill="none" /><path d="M951.3 234.6L991.4 234.6" stroke="#d8d8d8" stroke-width="1" fill="none" /><text x="969.4" y="227.9" font-size="7.68" fill="#1574e6" stroke="#1574e6" stroke-width="0.25" textLength="4.0" lengthAdjust="spacingAndGlyphs">TI</text><text x="967.5" y="244.1" font-size="7.96" fill="#1574e6" stroke="#1574e6" stroke-width="0.25" textLength="8.2" lengthAdjust="spacingAndGlyphs">101</text><path d="M971.3 253.2L968.2 258.2L974.4 258.2Z" fill="#ffffff"/><path d="M971.3 258.0L971.3 310.2" stroke="#c6c200" stroke-width="1.05" fill="none" stroke-dasharray="7.4 3"/><circle cx="971.3" cy="329.6" r="19.4" stroke="#d8d8d8" stroke-width="1.1" fill="none"/><text x="968.2" y="324.5" font-size="7.40" fill="#1574e6" stroke="#1574e6" stroke-width="0.25" textLength="6.2" lengthAdjust="spacingAndGlyphs">TT</text><text x="967.2" y="340.5" font-size="7.82" fill="#1574e6" stroke="#1574e6" stroke-width="0.25" textLength="8.2" lengthAdjust="spacingAndGlyphs">101</text><circle cx="971.3" cy="368.2" r="19.4" stroke="#d8d8d8" stroke-width="1.1" fill="none"/><text x="968.2" y="363.1" font-size="7.40" fill="#1574e6" stroke="#1574e6" stroke-width="0.25" textLength="6.2" lengthAdjust="spacingAndGlyphs">TE</text><text x="967.2" y="379.1" font-size="7.82" fill="#1574e6" stroke="#1574e6" stroke-width="0.25" textLength="8.2" lengthAdjust="spacingAndGlyphs">101</text><path d="M971.3 387.6L971.3 430.5" stroke="#c6c200" stroke-width="1.2" fill="none" /><text x="900.8" y="428.6" font-size="7.40" fill="#1574e6" stroke="#1574e6" stroke-width="0.25" textLength="24.1" lengthAdjust="spacingAndGlyphs">A-100</text><rect x="923.4" y="430.5" width="106.2" height="20.2" stroke="#d8d8d8" stroke-width="1.2" fill="none"/><path d="M923.4 432.8L1029.6 432.8" stroke="#d8d8d8" stroke-width="0.9" fill="none" /><ellipse cx="927.7" cy="441.6" rx="2.8" ry="5.8" stroke="#d8d8d8" stroke-width="1" fill="none"/><ellipse cx="936.5" cy="441.6" rx="2.8" ry="5.8" stroke="#d8d8d8" stroke-width="1" fill="none"/><ellipse cx="945.4" cy="441.6" rx="2.8" ry="5.8" stroke="#d8d8d8" stroke-width="1" fill="none"/><ellipse cx="954.2" cy="441.6" rx="2.8" ry="5.8" stroke="#d8d8d8" stroke-width="1" fill="none"/><ellipse cx="963.0" cy="441.6" rx="2.8" ry="5.8" stroke="#d8d8d8" stroke-width="1" fill="none"/><ellipse cx="971.9" cy="441.6" rx="2.8" ry="5.8" stroke="#d8d8d8" stroke-width="1" fill="none"/><ellipse cx="980.7" cy="441.6" rx="2.8" ry="5.8" stroke="#d8d8d8" stroke-width="1" fill="none"/><ellipse cx="989.6" cy="441.6" rx="2.8" ry="5.8" stroke="#d8d8d8" stroke-width="1" fill="none"/><ellipse cx="998.4" cy="441.6" rx="2.8" ry="5.8" stroke="#d8d8d8" stroke-width="1" fill="none"/><ellipse cx="1007.2" cy="441.6" rx="2.8" ry="5.8" stroke="#d8d8d8" stroke-width="1" fill="none"/><ellipse cx="1016.1" cy="441.6" rx="2.8" ry="5.8" stroke="#d8d8d8" stroke-width="1" fill="none"/><ellipse cx="1024.9" cy="441.6" rx="2.8" ry="5.8" stroke="#d8d8d8" stroke-width="1" fill="none"/><path d="M927.7 435.8L1025.0 435.8" stroke="#d8d8d8" stroke-width="0.8" fill="none" /><text x="1031.0" y="456.9" font-size="7.26" fill="#1574e6" stroke="#1574e6" stroke-width="0.25" textLength="20.1" lengthAdjust="spacingAndGlyphs">MIXER</text><path d="M1029.6 440.8L1127.0 440.8" stroke="#c41a1a" stroke-width="1.5" fill="none" /><path d="M1157.4 440.8L1250.4 440.8" stroke="#c41a1a" stroke-width="1.5" fill="none" /><path d="M1127.1 430.7V450.5L1157.3 430.7V450.5Z" stroke="#d8d8d8" stroke-width="1.1" fill="none"/><text x="1225.3" y="418.8" font-size="7.96" fill="#1574e6" stroke="#1574e6" stroke-width="0.25" textLength="23.6" lengthAdjust="spacingAndGlyphs">E-200</text><rect x="1250.4" y="421.5" width="39.6" height="38.8" stroke="#d8d8d8" stroke-width="1.2" fill="none"/><path d="M1260.1 428.7L1260.1 430.9L1280.6 430.9L1280.6 428.7" stroke="#d8d8d8" stroke-width="1" fill="none" /><path d="M1260.1 438.4L1260.1 440.6L1280.6 440.6L1280.6 438.4" stroke="#d8d8d8" stroke-width="1" fill="none" /><path d="M1260.1 448.1L1260.1 450.3L1280.6 450.3L1280.6 448.1" stroke="#d8d8d8" stroke-width="1" fill="none" /><text x="1292.1" y="465.0" font-size="7.40" fill="#1574e6" stroke="#1574e6" stroke-width="0.25" textLength="22.3" lengthAdjust="spacingAndGlyphs">DRYER</text><path d="M1270.3 460.3L1270.3 503.5" stroke="#c6c200" stroke-width="1.2" fill="none" /><circle cx="1270.2" cy="523.1" r="19.7" stroke="#d8d8d8" stroke-width="1.1" fill="none"/><text x="1267.3" y="518.0" font-size="7.40" fill="#1574e6" stroke="#1574e6" stroke-width="0.25" textLength="5.8" lengthAdjust="spacingAndGlyphs">TE</text><text x="1265.9" y="534.0" font-size="7.82" fill="#1574e6" stroke="#1574e6" stroke-width="0.25" textLength="8.6" lengthAdjust="spacingAndGlyphs">201</text><path d="M1270.3 543.0L1270.3 580.0" stroke="#c6c200" stroke-width="1.05" fill="none" stroke-dasharray="4.4 2.4"/><path d="M1270.3 586.2L1267.2 580.0L1273.4 580.0Z" fill="#ffffff"/><text x="1245.7" y="599.3" font-size="12.6" fill="#d0d010" font-family="Liberation Mono,monospace" textLength="60.3" lengthAdjust="spacingAndGlyphs">To Motor</text><text x="1245.7" y="612.2" font-size="12.6" fill="#d0d010" font-family="Liberation Mono,monospace" textLength="71.3" lengthAdjust="spacingAndGlyphs">Protection</text><text x="1245.7" y="624.7" font-size="12.6" fill="#d0d010" font-family="Liberation Mono,monospace" textLength="33.3" lengthAdjust="spacingAndGlyphs">Relay</text><circle cx="1362.9" cy="283.7" r="47.3" stroke="#4b5059" stroke-width="11.8" fill="none"/><rect x="1340.2" y="261.2" width="45.1" height="45.6" fill="#a7aaaf"/><rect x="1348.4" y="269.6" width="28.5" height="28.1" fill="#9c9fa5"/><path d="M1380.4 188.0L1380.4 814.0" stroke="#f2f2f2" stroke-width="1.4" fill="none" /><path d="M1395.3 188V447.6Q1395.3 456.6 1404.3 456.6H1437" stroke="#fff" stroke-width="2.2" fill="none"/><path d="M1437 463.5H1404.3Q1395.3 463.5 1395.3 472.5V681.7Q1395.3 690.7 1404.3 690.7H1437" stroke="#fff" stroke-width="2.2" fill="none"/><path d="M1437 698.6H1404.3Q1395.3 698.6 1395.3 707.6V814" stroke="#fff" stroke-width="2.2" fill="none"/><path d="M1396.0 704.5L1437.0 704.5" stroke="#c9c9c9" stroke-width="1.1" fill="none" /><path d="M1396.0 712.0L1437.0 712.0" stroke="#c9c9c9" stroke-width="1.1" fill="none" /><path d="M1396.0 719.0L1437.0 719.0" stroke="#c9c9c9" stroke-width="1.1" fill="none" /><path d="M1396.0 726.4L1437.0 726.4" stroke="#c9c9c9" stroke-width="1.1" fill="none" /><path d="M1396.0 733.8L1437.0 733.8" stroke="#c9c9c9" stroke-width="1.1" fill="none" /><path d="M1396.0 741.2L1437.0 741.2" stroke="#c9c9c9" stroke-width="1.1" fill="none" /><path d="M1396.0 748.0L1437.0 748.0" stroke="#c9c9c9" stroke-width="1.1" fill="none" /><path d="M1396.0 755.5L1437.0 755.5" stroke="#f2f2f2" stroke-width="1.1" fill="none" /><path d="M1405.7 704.5L1405.7 755.5" stroke="#e0e0e0" stroke-width="1.1" fill="none" /><path d="M1425.7 704.5L1425.7 755.5" stroke="#e0e0e0" stroke-width="1.1" fill="none" /><text x="1397.2" y="753.6" font-size="4.75" fill="#e01212" stroke="#e01212" stroke-width="0.25" textLength="6.4" lengthAdjust="spacingAndGlyphs" font-weight="bold">NO.</text><text x="1411.0" y="753.6" font-size="4.75" fill="#e01212" stroke="#e01212" stroke-width="0.25" textLength="9.2" lengthAdjust="spacingAndGlyphs" font-weight="bold">DATE</text><text x="1396.4" y="759.8" font-size="4.19" fill="#e01212" stroke="#e01212" stroke-width="0.25" textLength="18.6" lengthAdjust="spacingAndGlyphs" font-weight="bold">DWG TITLE</text><text transform="translate(1390.2,818) rotate(-90)" font-size="6.4" fill="#e01212" textLength="287" lengthAdjust="spacingAndGlyphs">CUMENTS\AUTODESK\AUTOCAD ELECTRICAL 2007\AEDATA\PROJ\EXTRA LIBRARY DEMO\DEMO01.DWG</text><path d="M1437 492.6H1421.4V502.2H1425.6V497.2H1437" stroke="#d4d4d4" stroke-width="1" fill="none"/><path d="M1437 552.4H1421.4V562H1425.6V557H1437" stroke="#d4d4d4" stroke-width="1" fill="none"/><path d="M1437 477.6Q1433.4 477.6 1433.4 482Q1433.4 486.4 1437 486.4" stroke="#d4d4d4" stroke-width="1" fill="none"/><circle cx="1436" cy="473.6" r="1.2" fill="#d4d4d4"/><path d="M1437 505.6Q1433 509 1433 513.4Q1433 517.8 1437 521" stroke="#d4d4d4" stroke-width="1" fill="none"/><path d="M1437 528.4Q1433 531.8 1433 536.2Q1433 540.6 1437 544" stroke="#d4d4d4" stroke-width="1" fill="none"/><path d="M1437 565.6Q1433.8 567.4 1433.6 570.4" stroke="#d4d4d4" stroke-width="1" fill="none"/><path d="M1437 580.6Q1433 584.4 1433 589Q1433 593.6 1437 597" stroke="#d4d4d4" stroke-width="1" fill="none"/><path d="M1437 603.6H1432.6V608.6H1427V612H1432.6V619.6H1437" stroke="#d4d4d4" stroke-width="1" fill="none"/><path d="M1437 625.6H1434.6V632H1437M1437 642.6H1434.6V649H1437" stroke="#d4d4d4" stroke-width="1" fill="none"/><path d="M1437 655.4L1423.6 662.6V667.2L1437 671.6M1437 659.6L1429.6 663.6V666.2L1437 667.8" stroke="#d4d4d4" stroke-width="1" fill="none"/><rect x="262" y="188" width="1174" height="0.5" fill="#3b4453"/></g></svg></div>
<span class="t" style="left:263.48px;top:195.76px;font-size:12.4px;color:#e2e2e2;transform:scaleX(1.0253);transform-origin:0 0;">[−][Top][2D Wireframe]</span>
<span class="t" style="left:1355.18px;top:225.48px;font-size:19px;color:#a9acb1;font-weight:bold;transform:scaleX(1.0893);transform-origin:0 0;">N</span>
<span class="t" style="left:1356.38px;top:323.80px;font-size:19.6px;color:#a9acb1;font-weight:bold;transform:scaleX(1.0256);transform-origin:0 0;">S</span>
<span class="t" style="left:1304.50px;top:275.11px;font-size:18.8px;color:#a9acb1;font-weight:bold;transform:scaleX(0.9944);transform-origin:0 0;">W</span>
<span class="t" style="left:1406.08px;top:275.11px;font-size:18.8px;color:#a9acb1;font-weight:bold;transform:scaleX(1.0189);transform-origin:0 0;">E</span>
<span class="t" style="left:1353.53px;top:277.78px;font-size:13px;color:#545962;font-weight:bold;transform:scaleX(0.7181);transform-origin:0 0;">TOP</span>
<div class="abs" style="left:1339.8px;top:360px;width:46.7px;height:17px;background:#8e919b;border-radius:3px;opacity:.93"></div>
<span class="t" style="left:1344.10px;top:362.80px;font-size:10.6px;color:#5f636c;transform:scaleX(0.9752);transform-origin:0 0;">WCS</span>
<svg style="left:1375.1px;top:366.6px" width="6.4" height="3.6" viewBox="0 0 6.4 3.6"><path d="M0 0H6.4L3.2 3.6Z" fill="#9a9da6"/></svg>
<div class="abs" style="left:1379.7px;top:188.4px;width:1.4px;height:624.8px;background:#f2f2f2;"></div>
<div class="abs" style="left:1376px;top:202.4px;width:10.4px;height:3.4px;background:#f4f4f4;"></div>
<svg style="left:1395px;top:196px;" width="13" height="12" viewBox="0 0 13 12"><rect x="4" y="1" width="7.4" height="7.4" fill="#212830" stroke="#e8e8e8" stroke-width="1.5"/><rect x="1.4" y="3.8" width="7" height="7" fill="#212830" stroke="#f8f8f8" stroke-width="2.4"/></svg>
<svg style="left:1416px;top:197px;" width="11" height="10" viewBox="0 0 11 10"><path d="M1 1L9.4 9M9.4 1L1 9" stroke="#f8f8f8" stroke-width="2.7"/></svg>
<!-- p5_cmd.py -->
<div class="abs" style="left:262px;top:813px;width:1175px;height:69px;background:#3b4453;"></div>
<div class="abs" style="left:262.2px;top:817.6px;width:25.2px;height:59.8px;background:#2e3542;"></div>
<div class="abs" style="left:287.4px;top:817.6px;width:1148px;height:38.4px;background:#c8c8c8;border-radius:0 3px 0 0;overflow:hidden"><span class="t" style="left:2.17px;top:-5.76px;font-size:12px;color:#111;font-family:'Liberation Mono',monospace;transform:scaleX(1.0481);transform-origin:0 0;-webkit-text-stroke:0.35px #111;">Command:</span><span class="t" style="left:2.17px;top:9.64px;font-size:12px;color:#111;font-family:'Liberation Mono',monospace;transform:scaleX(1.0481);transform-origin:0 0;-webkit-text-stroke:0.35px #111;">Command:</span><span class="t" style="left:2.17px;top:24.84px;font-size:12px;color:#111;font-family:'Liberation Mono',monospace;transform:scaleX(1.0481);transform-origin:0 0;-webkit-text-stroke:0.35px #111;">Command:</span></div>
<div class="abs" style="left:287.4px;top:856px;width:1148px;height:1px;background:#7d7d7d;"></div>
<div class="abs" style="left:287.4px;top:857px;width:1148px;height:20.4px;background:#ffffff;border-radius:0 0 3px 0"></div>
<svg style="left:262px;top:817px;" width="26" height="62" viewBox="0 0 26 62">
<path d="M3.6 6H22" stroke="#e8e8e8" stroke-width="1.2" stroke-dasharray="1.6 1.6"/>
<path d="M7.8 19.8L16.2 28.2M16.2 19.8L7.8 28.2" stroke="#f0f0f0" stroke-width="1.8"/>
<path d="M6.6 54.2L14.6 46.2" stroke="#e4e4e4" stroke-width="2.6" stroke-linecap="round"/><path d="M18.6 41.2A4 4 0 1 0 19.4 47.2L16.6 46.4L15.4 44L17.6 41.6Z" fill="#e4e4e4"/><circle cx="16.2" cy="44.6" r="3.4" fill="none" stroke="#e4e4e4" stroke-width="0"/>
</svg>
<svg style="left:291px;top:861px;" width="30" height="14" viewBox="0 0 30 14"><rect x="0.8" y="1" width="15.6" height="11.4" fill="#ececec" stroke="#8a8a8a" stroke-width="1"/><rect x="0.8" y="1" width="15.6" height="2.6" fill="#6a6a6a"/><path d="M3 6.4L5.4 7.8L3 9.2M6.4 9.6H9" stroke="#555" stroke-width=".9" fill="none"/><path d="M19.4 5H26.6L23 8.8Z" fill="#7a7a7a"/></svg>
<span class="t" style="left:324.20px;top:861.86px;font-size:12.4px;color:#8c8c8c;font-family:'Liberation Mono',monospace;font-style:italic;transform:scaleX(0.9981);transform-origin:0 0;">Type a command</span>
<div class="abs" style="left:2px;top:882px;width:1436px;height:32px;background:#222831;"></div>
<div class="abs" style="left:5.8px;top:885px;width:803.5px;height:24px;background:#3b4453;"></div>
<div class="abs" style="left:818.2px;top:885px;width:48.5px;height:24px;background:#3b4453;"></div>
<div class="abs" style="left:871px;top:885px;width:65px;height:24px;background:#3b4453;"></div>
<div class="abs" style="left:940px;top:885px;width:105.5px;height:24px;background:#3b4453;"></div>
<div class="abs" style="left:1047.3px;top:885px;width:64.5px;height:24px;background:#3b4453;"></div>
<div class="abs" style="left:1116px;top:885px;width:106.79999999999995px;height:24px;background:#3b4453;"></div>
<div class="abs" style="left:1227px;top:885px;width:40.200000000000045px;height:24px;background:#3b4453;"></div>
<div class="abs" style="left:1269px;top:885px;width:24.200000000000045px;height:24px;background:#3b4453;"></div>
<div class="abs" style="left:1297.2px;top:885px;width:24.299999999999955px;height:24px;background:#3b4453;"></div>
<div class="abs" style="left:1323.8px;top:885px;width:57.200000000000045px;height:24px;background:#3b4453;"></div>
<div class="abs" style="left:1384px;top:885px;width:23.700000000000045px;height:24px;background:#3b4453;"></div>
<div class="abs" style="left:1410px;top:885px;width:24.799999999999955px;height:24px;background:#3b4453;"></div>
<div class="abs" style="left:896px;top:885px;width:23px;height:24px;background:#5b8fc8;"></div>
<div class="abs" style="left:965px;top:885px;width:22.799999999999955px;height:24px;background:#5b8fc8;"></div>
<div class="abs" style="left:1047.3px;top:885px;width:23.40000000000009px;height:24px;background:#5b8fc8;"></div>
<div class="abs" style="left:1116px;top:885px;width:23.700000000000045px;height:24px;background:#5b8fc8;"></div>
<span class="t" style="left:821.39px;top:891.08px;font-size:13px;color:#f0f0f0;font-weight:bold;transform:scaleX(0.8993);transform-origin:0 0;">MODEL</span>
<svg style="left:800px;top:885px;" width="640" height="24" viewBox="0 0 640 24">
<path d="M79.4 3.6V19.4M83.4 3.6V19.4M87.4 3.6V19.4M75.6 7.4H90.8M75.6 11.4H90.8M75.6 15.4H90.8" stroke="#c8c8c8" stroke-width="1"/>
<g fill="#fff"><rect x="102" y="6.4" width="1.8" height="1.8"/><rect x="106.6" y="6.4" width="1.8" height="1.8"/><rect x="111.2" y="6.4" width="1.8" height="1.8"/><rect x="102" y="11" width="1.8" height="1.8"/><rect x="106.6" y="11" width="1.8" height="1.8"/><rect x="111.2" y="11" width="1.8" height="1.8"/><rect x="102" y="15.6" width="1.8" height="1.8"/><rect x="106.6" y="15.6" width="1.8" height="1.8"/><rect x="111.2" y="15.6" width="1.8" height="1.8"/></g>
<path d="M123.9 9.8H131.7L127.8 14Z" fill="#e8e8e8"/>
<path d="M145 4.4V19.6H160" stroke="#c8c8c8" stroke-width="1.3" fill="none"/><rect x="145" y="15.6" width="4" height="4" stroke="#c8c8c8" stroke-width=".9" fill="none"/>
<circle cx="175" cy="12.4" r="6.6" stroke="#f2f2f2" stroke-width="1.3" fill="none"/><path d="M175 12.4H184.6M175 12.4L181.6 5.6" stroke="#f2f2f2" stroke-width="1.2"/>
<path d="M192.8 9.8H200.6L196.7 14Z" fill="#e8e8e8"/>
<path d="M217.4 4V20" stroke="#3dc86a" stroke-width="1.2"/><path d="M211 5L223 18.4" stroke="#d4535a" stroke-width="1.2"/><rect x="215.8" y="10.4" width="3.2" height="3.2" fill="#3b4453" stroke="#e8e8e8" stroke-width=".8"/>
<path d="M233.4 9.8H241.2L237.3 14Z" fill="#e8e8e8"/>
<path d="M251 18.4H267M251 18.4L266 5.4" stroke="#f4f4f4" stroke-width="1.3"/><circle cx="257.6" cy="12.6" r="1.4" fill="#fff"/>
<rect x="277.4" y="6.4" width="13.6" height="13.2" stroke="#c8c8c8" stroke-width="1.3" fill="none"/><rect x="275.6" y="4.6" width="3.8" height="3.8" fill="#3b4453" stroke="#e9a66a" stroke-width="1"/>
<path d="M299.4 9.8H307.2L303.3 14Z" fill="#e8e8e8"/>
<path transform="translate(326.6,13) scale(1)" d="M0 -9L2.5 -1.6L1.7 0.6L7.2 7L0 3L-7.2 7L-1.7 0.6L-2.5 -1.6Z" fill="#f2f2f2"/><circle cx="333.6" cy="7" r="2.4" stroke="#f2f2f2" stroke-width="1" fill="none"/>
<path transform="translate(350.2,13.4) scale(1)" d="M0 -9L2.5 -1.6L1.7 0.6L7.2 7L0 3L-7.2 7L-1.7 0.6L-2.5 -1.6Z" fill="#dcdcdc"/><path d="M357 3.4L353.8 8H356L354.6 11.2L358.6 6.4H356.2L358 3.4Z" fill="#dcdcdc"/>
<path transform="translate(376.4,13.4) scale(1)" d="M0 -9L2.5 -1.6L1.7 0.6L7.2 7L0 3L-7.2 7L-1.7 0.6L-2.5 -1.6Z" fill="#dcdcdc"/>
<path d="M411.1 9.8H418.9L415.0 14Z" fill="#e8e8e8"/>
<g transform="translate(439,12.1)"><circle r="4.6" fill="none" stroke="#e2e2e2" stroke-width="4.2"/><circle r="7.3" fill="none" stroke="#e2e2e2" stroke-width="2.2" stroke-dasharray="2.7 3.033" stroke-dashoffset="1.35"/></g>
<path d="M455.5 9.8H463.3L459.4 14Z" fill="#e8e8e8"/>
<path d="M473.2 12.2H488M480.6 4.8V19.6" stroke="#f4f4f4" stroke-width="1.7"/>
<rect x="501.6" y="4.8" width="6" height="6" stroke="#c8c8c8" stroke-width="1" fill="none"/><circle cx="514.2" cy="11.6" r="3.4" stroke="#c8c8c8" stroke-width="1" fill="none"/><path d="M507.6 14.4L511 20H504.2Z" stroke="#c8c8c8" stroke-width="1" fill="none"/>
<path d="M531.4 7.4V16.6A6.6 2.6 0 0 0 544.6 16.6V7.4" fill="#d0d0d0"/><ellipse cx="538" cy="7.4" rx="6.6" ry="2.6" fill="#f0f0f0"/><path d="M531.4 12A6.6 2.6 0 0 0 544.6 12" stroke="#9a9a9a" stroke-width=".8" fill="none"/><path d="M539.6 16.6L542 19L546.4 14.2" stroke="#3ecf6c" stroke-width="1.7" fill="none"/>
<path d="M558 4H566.4L571 8.6V20H558Z" fill="#3d6eb4"/><path d="M566.4 4V8.6H571Z" fill="#8fb6e6"/><path d="M558 14L571 16.6V20H558Z" fill="#f0b63a"/><circle cx="562.4" cy="9.4" r="2" stroke="#e8f0ff" stroke-width=".9" fill="none"/><path d="M562.4 4.6V7.4M562.4 11.4V14M558.2 9.4H560.4M564.4 9.4H570" stroke="#e8f0ff" stroke-width=".7"/><path d="M566.6 17.6L569 20L573.4 15.2" stroke="#3ecf6c" stroke-width="1.7" fill="none"/>
<rect x="588.4" y="6" width="15.4" height="11.4" stroke="#c8c8c8" stroke-width="1.2" fill="none"/><path d="M590.6 15.2L594.2 12M601.6 8.2L598 11.4" stroke="#c8c8c8" stroke-width="1"/><path d="M590 12.6V15.8H593.4ZM602.2 10.8V7.6H598.8Z" fill="#c8c8c8"/>
<path d="M614.4 6.4H630.4M614.4 12.2H630.4M614.4 18H630.4" stroke="#f0f0f0" stroke-width="1.8"/>
</svg>
<span class="t" style="left:1193.87px;top:891.61px;font-size:12px;color:#f0f0f0;font-weight:bold;transform:scaleX(0.7561);transform-origin:0 0;">1:1</span>
</div></div>
</body>
</html>
